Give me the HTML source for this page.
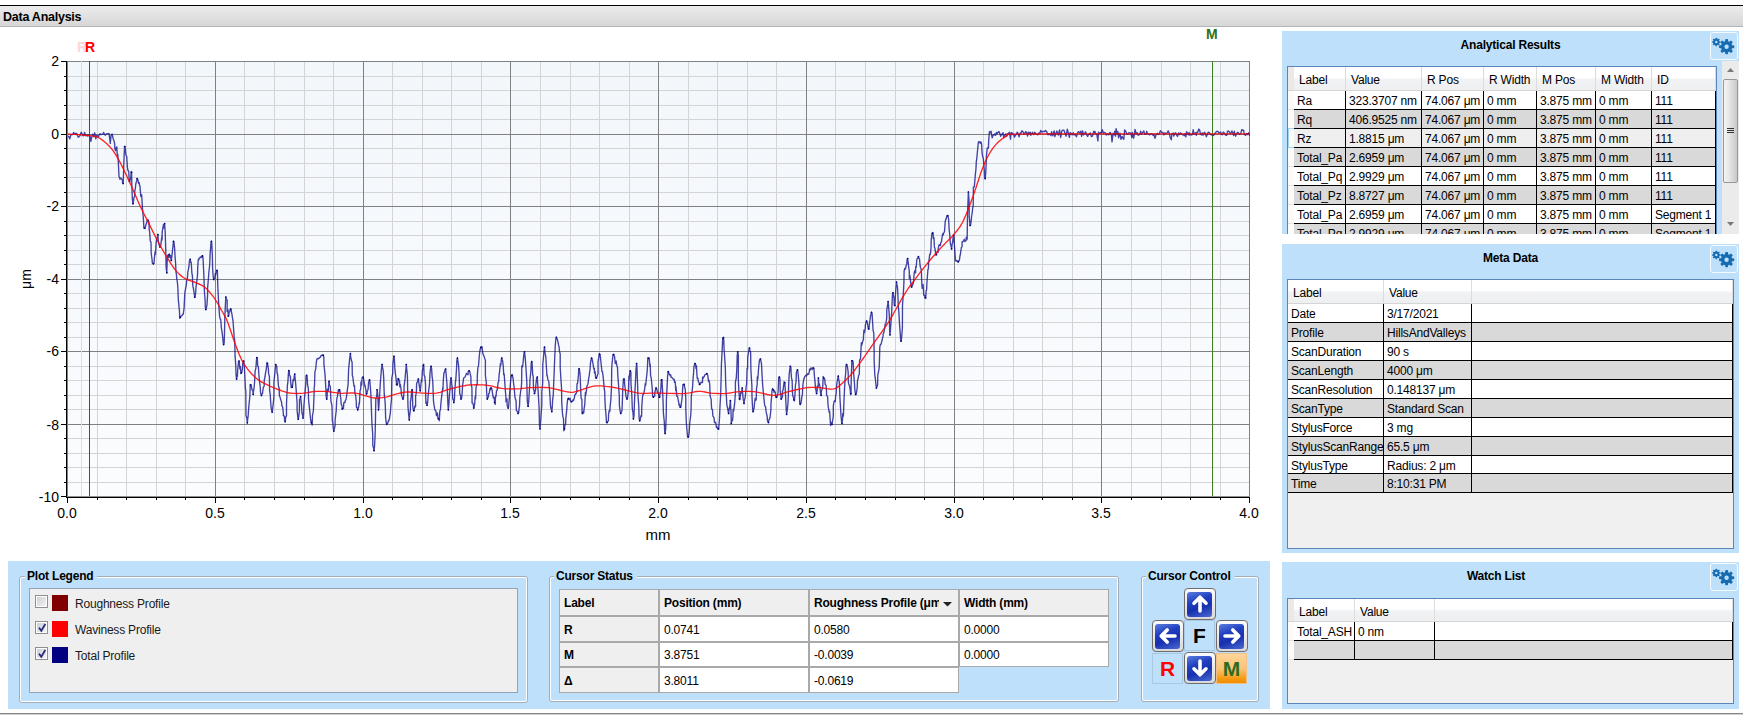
<!DOCTYPE html><html><head><meta charset="utf-8"><style>
*{margin:0;padding:0;box-sizing:border-box}
html,body{width:1743px;height:717px;overflow:hidden;background:#fff;font-family:"Liberation Sans", sans-serif;font-size:12px;color:#000}
.abs{position:absolute}
#topline{position:absolute;left:0;top:5px;width:1743px;height:1px;background:#000}
#hdr{position:absolute;left:0;top:6px;width:1743px;height:21px;background:linear-gradient(#ececec,#d6d6d6);border-bottom:1px solid #b4b4b4}
#hdr span{position:absolute;left:3px;top:4px;font-weight:bold;font-size:12.5px;letter-spacing:-0.25px}
.yl{position:absolute;left:20px;width:39px;text-align:right;font-size:14px;line-height:18px}
.xl{position:absolute;top:504px;width:60px;text-align:center;font-size:14px;line-height:18px}
.axt{position:absolute;font-size:14px;line-height:16px;text-align:center}
.mk{position:absolute;font-weight:bold;font-size:14px;line-height:16px}
.panel{position:absolute;background:#bee0fb}
.ptitle{position:absolute;left:0;margin-top:1px;width:100%;text-align:center;font-weight:bold;font-size:12px;letter-spacing:-0.2px}
.gearbtn{position:absolute;width:28px;height:28px;border:1px solid #f4faff;border-radius:3px;background:#bee0fb}
.gearbtn svg{position:absolute;left:-1px;top:-1px}
.tbl{position:absolute;background:#f0f0f0;border:1px solid #5b87b8;overflow:hidden}
.row{position:absolute;left:0;height:19px;border-bottom:1px solid #000}
.cell{position:absolute;top:0;height:18px;line-height:18px;padding-top:1px;padding-left:3px;white-space:nowrap;overflow:hidden;border-right:1px solid #000;letter-spacing:-0.2px}
.hrow{position:absolute;left:0;top:0;height:24px;background:linear-gradient(#ffffff 0%,#ffffff 45%,#f1f2f4 55%,#eeeff1 100%);border-bottom:1px solid #d5d5d5}
.hcell{position:absolute;top:0;height:23px;line-height:23px;padding-top:2px;padding-left:5px;white-space:nowrap;overflow:hidden;border-right:1px solid #dcdcdc;letter-spacing:-0.2px}
.grp{position:absolute;border:1px solid #fff;border-radius:3px;box-shadow:0 0 0 1px #a9b8c6 inset}
.gtitle{position:absolute;background:#bee0fb;font-weight:bold;font-size:12px;padding:0 4px 0 2px;line-height:14px;letter-spacing:-0.2px}
</style></head><body>
<div id="topline"></div><div id="hdr"><span>Data Analysis</span></div>
<svg width="1743" height="560" viewBox="0 0 1743 560" style="position:absolute;left:0;top:0" shape-rendering="crispEdges">
<defs><linearGradient id="pbg" x1="0" y1="0" x2="0" y2="1"><stop offset="0" stop-color="#f2f7fc"/><stop offset="1" stop-color="#fbfcfe"/></linearGradient></defs><rect x="68" y="61" width="1182" height="435" fill="url(#pbg)"/>
<rect x="97" y="61" width="1" height="436" fill="#d4d4d4"/>
<rect x="126" y="61" width="1" height="436" fill="#d4d4d4"/>
<rect x="156" y="61" width="1" height="436" fill="#d4d4d4"/>
<rect x="185" y="61" width="1" height="436" fill="#d4d4d4"/>
<rect x="244" y="61" width="1" height="436" fill="#d4d4d4"/>
<rect x="274" y="61" width="1" height="436" fill="#d4d4d4"/>
<rect x="304" y="61" width="1" height="436" fill="#d4d4d4"/>
<rect x="333" y="61" width="1" height="436" fill="#d4d4d4"/>
<rect x="392" y="61" width="1" height="436" fill="#d4d4d4"/>
<rect x="422" y="61" width="1" height="436" fill="#d4d4d4"/>
<rect x="451" y="61" width="1" height="436" fill="#d4d4d4"/>
<rect x="481" y="61" width="1" height="436" fill="#d4d4d4"/>
<rect x="540" y="61" width="1" height="436" fill="#d4d4d4"/>
<rect x="570" y="61" width="1" height="436" fill="#d4d4d4"/>
<rect x="599" y="61" width="1" height="436" fill="#d4d4d4"/>
<rect x="629" y="61" width="1" height="436" fill="#d4d4d4"/>
<rect x="688" y="61" width="1" height="436" fill="#d4d4d4"/>
<rect x="717" y="61" width="1" height="436" fill="#d4d4d4"/>
<rect x="747" y="61" width="1" height="436" fill="#d4d4d4"/>
<rect x="776" y="61" width="1" height="436" fill="#d4d4d4"/>
<rect x="835" y="61" width="1" height="436" fill="#d4d4d4"/>
<rect x="865" y="61" width="1" height="436" fill="#d4d4d4"/>
<rect x="895" y="61" width="1" height="436" fill="#d4d4d4"/>
<rect x="924" y="61" width="1" height="436" fill="#d4d4d4"/>
<rect x="983" y="61" width="1" height="436" fill="#d4d4d4"/>
<rect x="1013" y="61" width="1" height="436" fill="#d4d4d4"/>
<rect x="1042" y="61" width="1" height="436" fill="#d4d4d4"/>
<rect x="1072" y="61" width="1" height="436" fill="#d4d4d4"/>
<rect x="1131" y="61" width="1" height="436" fill="#d4d4d4"/>
<rect x="1161" y="61" width="1" height="436" fill="#d4d4d4"/>
<rect x="1190" y="61" width="1" height="436" fill="#d4d4d4"/>
<rect x="1220" y="61" width="1" height="436" fill="#d4d4d4"/>
<rect x="67" y="76" width="1183" height="1" fill="#d4d4d4"/>
<rect x="67" y="90" width="1183" height="1" fill="#d4d4d4"/>
<rect x="67" y="105" width="1183" height="1" fill="#d4d4d4"/>
<rect x="67" y="119" width="1183" height="1" fill="#d4d4d4"/>
<rect x="67" y="148" width="1183" height="1" fill="#d4d4d4"/>
<rect x="67" y="163" width="1183" height="1" fill="#d4d4d4"/>
<rect x="67" y="177" width="1183" height="1" fill="#d4d4d4"/>
<rect x="67" y="192" width="1183" height="1" fill="#d4d4d4"/>
<rect x="67" y="221" width="1183" height="1" fill="#d4d4d4"/>
<rect x="67" y="235" width="1183" height="1" fill="#d4d4d4"/>
<rect x="67" y="250" width="1183" height="1" fill="#d4d4d4"/>
<rect x="67" y="264" width="1183" height="1" fill="#d4d4d4"/>
<rect x="67" y="293" width="1183" height="1" fill="#d4d4d4"/>
<rect x="67" y="308" width="1183" height="1" fill="#d4d4d4"/>
<rect x="67" y="322" width="1183" height="1" fill="#d4d4d4"/>
<rect x="67" y="337" width="1183" height="1" fill="#d4d4d4"/>
<rect x="67" y="366" width="1183" height="1" fill="#d4d4d4"/>
<rect x="67" y="380" width="1183" height="1" fill="#d4d4d4"/>
<rect x="67" y="395" width="1183" height="1" fill="#d4d4d4"/>
<rect x="67" y="409" width="1183" height="1" fill="#d4d4d4"/>
<rect x="67" y="438" width="1183" height="1" fill="#d4d4d4"/>
<rect x="67" y="453" width="1183" height="1" fill="#d4d4d4"/>
<rect x="67" y="467" width="1183" height="1" fill="#d4d4d4"/>
<rect x="67" y="482" width="1183" height="1" fill="#d4d4d4"/>
<rect x="215" y="61" width="1" height="436" fill="#808080"/>
<rect x="363" y="61" width="1" height="436" fill="#808080"/>
<rect x="510" y="61" width="1" height="436" fill="#808080"/>
<rect x="658" y="61" width="1" height="436" fill="#808080"/>
<rect x="806" y="61" width="1" height="436" fill="#808080"/>
<rect x="954" y="61" width="1" height="436" fill="#808080"/>
<rect x="1101" y="61" width="1" height="436" fill="#808080"/>
<rect x="1249" y="61" width="1" height="436" fill="#808080"/>
<rect x="67" y="61" width="1183" height="1" fill="#808080"/>
<rect x="67" y="134" width="1183" height="1" fill="#808080"/>
<rect x="67" y="206" width="1183" height="1" fill="#808080"/>
<rect x="67" y="279" width="1183" height="1" fill="#808080"/>
<rect x="67" y="351" width="1183" height="1" fill="#808080"/>
<rect x="67" y="424" width="1183" height="1" fill="#808080"/>
<rect x="67" y="496" width="1183" height="1" fill="#808080"/>
<rect x="67" y="61" width="1" height="436" fill="#808080"/>
<rect x="67" y="496" width="1183" height="1" fill="#909090"/>
<rect x="66" y="61" width="1" height="437" fill="#000"/>
<rect x="66" y="497" width="1184" height="1" fill="#000"/>
<rect x="61" y="61" width="6" height="1" fill="#000"/>
<rect x="64" y="76" width="3" height="1" fill="#000"/>
<rect x="64" y="90" width="3" height="1" fill="#000"/>
<rect x="64" y="105" width="3" height="1" fill="#000"/>
<rect x="64" y="119" width="3" height="1" fill="#000"/>
<rect x="61" y="134" width="6" height="1" fill="#000"/>
<rect x="64" y="148" width="3" height="1" fill="#000"/>
<rect x="64" y="163" width="3" height="1" fill="#000"/>
<rect x="64" y="177" width="3" height="1" fill="#000"/>
<rect x="64" y="192" width="3" height="1" fill="#000"/>
<rect x="61" y="206" width="6" height="1" fill="#000"/>
<rect x="64" y="221" width="3" height="1" fill="#000"/>
<rect x="64" y="235" width="3" height="1" fill="#000"/>
<rect x="64" y="250" width="3" height="1" fill="#000"/>
<rect x="64" y="264" width="3" height="1" fill="#000"/>
<rect x="61" y="279" width="6" height="1" fill="#000"/>
<rect x="64" y="293" width="3" height="1" fill="#000"/>
<rect x="64" y="308" width="3" height="1" fill="#000"/>
<rect x="64" y="322" width="3" height="1" fill="#000"/>
<rect x="64" y="337" width="3" height="1" fill="#000"/>
<rect x="61" y="351" width="6" height="1" fill="#000"/>
<rect x="64" y="366" width="3" height="1" fill="#000"/>
<rect x="64" y="380" width="3" height="1" fill="#000"/>
<rect x="64" y="395" width="3" height="1" fill="#000"/>
<rect x="64" y="409" width="3" height="1" fill="#000"/>
<rect x="61" y="424" width="6" height="1" fill="#000"/>
<rect x="64" y="438" width="3" height="1" fill="#000"/>
<rect x="64" y="453" width="3" height="1" fill="#000"/>
<rect x="64" y="467" width="3" height="1" fill="#000"/>
<rect x="64" y="482" width="3" height="1" fill="#000"/>
<rect x="61" y="496" width="6" height="1" fill="#000"/>
<rect x="67" y="497" width="1" height="6" fill="#000"/>
<rect x="97" y="497" width="1" height="3" fill="#000"/>
<rect x="126" y="497" width="1" height="3" fill="#000"/>
<rect x="156" y="497" width="1" height="3" fill="#000"/>
<rect x="185" y="497" width="1" height="3" fill="#000"/>
<rect x="215" y="497" width="1" height="6" fill="#000"/>
<rect x="244" y="497" width="1" height="3" fill="#000"/>
<rect x="274" y="497" width="1" height="3" fill="#000"/>
<rect x="304" y="497" width="1" height="3" fill="#000"/>
<rect x="333" y="497" width="1" height="3" fill="#000"/>
<rect x="363" y="497" width="1" height="6" fill="#000"/>
<rect x="392" y="497" width="1" height="3" fill="#000"/>
<rect x="422" y="497" width="1" height="3" fill="#000"/>
<rect x="451" y="497" width="1" height="3" fill="#000"/>
<rect x="481" y="497" width="1" height="3" fill="#000"/>
<rect x="510" y="497" width="1" height="6" fill="#000"/>
<rect x="540" y="497" width="1" height="3" fill="#000"/>
<rect x="570" y="497" width="1" height="3" fill="#000"/>
<rect x="599" y="497" width="1" height="3" fill="#000"/>
<rect x="629" y="497" width="1" height="3" fill="#000"/>
<rect x="658" y="497" width="1" height="6" fill="#000"/>
<rect x="688" y="497" width="1" height="3" fill="#000"/>
<rect x="717" y="497" width="1" height="3" fill="#000"/>
<rect x="747" y="497" width="1" height="3" fill="#000"/>
<rect x="776" y="497" width="1" height="3" fill="#000"/>
<rect x="806" y="497" width="1" height="6" fill="#000"/>
<rect x="835" y="497" width="1" height="3" fill="#000"/>
<rect x="865" y="497" width="1" height="3" fill="#000"/>
<rect x="895" y="497" width="1" height="3" fill="#000"/>
<rect x="924" y="497" width="1" height="3" fill="#000"/>
<rect x="954" y="497" width="1" height="6" fill="#000"/>
<rect x="983" y="497" width="1" height="3" fill="#000"/>
<rect x="1013" y="497" width="1" height="3" fill="#000"/>
<rect x="1042" y="497" width="1" height="3" fill="#000"/>
<rect x="1072" y="497" width="1" height="3" fill="#000"/>
<rect x="1101" y="497" width="1" height="6" fill="#000"/>
<rect x="1131" y="497" width="1" height="3" fill="#000"/>
<rect x="1161" y="497" width="1" height="3" fill="#000"/>
<rect x="1190" y="497" width="1" height="3" fill="#000"/>
<rect x="1220" y="497" width="1" height="3" fill="#000"/>
<rect x="1249" y="497" width="1" height="6" fill="#000"/>
<rect x="81" y="61" width="1" height="435" fill="#ffd0d0"/>
<rect x="89" y="61" width="1" height="435" fill="#ff0000"/>
<rect x="1212" y="61" width="1" height="435" fill="#3f7f1f"/>
</svg>
<svg width="1743" height="560" viewBox="0 0 1743 560" style="position:absolute;left:0;top:0">
<defs><clipPath id="pc"><rect x="68" y="61" width="1182" height="435"/></clipPath></defs>
<g clip-path="url(#pc)">
<path d="M68.0,136.2 L68.9,136.7 L69.8,138.9 L70.8,135.0 L71.8,134.4 L72.7,134.5 L73.6,132.5 L74.6,133.9 L75.7,133.4 L76.8,133.5 L77.6,136.0 L78.3,137.3 L79.2,136.5 L79.9,135.7 L81.2,132.2 L82.0,133.8 L83.1,135.9 L83.7,135.5 L84.6,132.4 L85.4,135.7 L86.4,135.1 L87.2,136.1 L87.9,134.6 L88.8,135.7 L89.8,134.9 L90.9,141.5 L91.7,137.1 L92.7,134.1 L93.9,136.8 L94.7,132.8 L95.2,135.0 L95.8,138.9 L96.8,135.2 L98.0,136.3 L98.6,136.6 L99.2,134.5 L100.1,133.7 L100.9,134.7 L102.0,134.4 L102.9,134.3 L103.6,132.5 L104.8,134.8 L105.4,135.2 L106.5,133.8 L107.4,133.6 L108.5,133.9 L109.0,133.4 L110.3,143.4 L111.1,135.2 L112.2,134.1 L113.0,138.1 L114.0,141.0 L114.7,143.9 L114.8,147.8 L115.4,150.7 L116.2,147.9 L116.8,146.9 L117.3,155.8 L117.8,154.4 L118.3,161.8 L119.0,176.5 L119.3,177.1 L120.0,179.2 L120.6,178.0 L121.0,178.0 L121.3,178.9 L122.4,179.8 L122.5,182.9 L123.2,183.5 L123.5,173.4 L124.1,156.3 L124.6,146.5 L125.1,146.5 L125.9,155.0 L126.4,155.9 L126.7,156.3 L127.4,167.4 L128.0,170.7 L128.7,171.1 L129.2,180.1 L129.5,181.4 L130.0,180.7 L130.8,177.4 L131.2,171.4 L131.6,172.3 L131.8,182.9 L132.3,198.5 L133.0,203.7 L133.4,202.0 L134.0,197.4 L134.7,196.4 L134.8,190.5 L135.3,188.9 L135.8,183.8 L136.7,180.7 L137.1,178.6 L137.8,179.4 L138.1,180.7 L138.5,183.3 L139.2,182.6 L139.4,185.0 L139.9,185.5 L140.8,196.4 L141.1,194.6 L141.7,194.9 L141.9,198.7 L142.5,208.8 L142.9,213.3 L143.4,219.0 L143.9,228.0 L144.5,228.0 L145.1,228.5 L145.5,225.8 L145.7,225.8 L146.4,223.3 L147.1,221.2 L147.2,220.4 L147.8,220.2 L148.4,220.6 L149.0,222.4 L149.2,229.6 L149.6,231.6 L150.3,241.1 L151.0,242.2 L151.2,253.0 L152.1,260.0 L152.3,262.7 L153.0,263.5 L153.4,263.8 L154.0,263.3 L154.2,260.3 L155.1,251.6 L155.5,254.4 L155.9,245.9 L156.4,240.0 L156.8,238.4 L157.5,236.7 L157.9,234.7 L158.3,240.6 L158.6,242.7 L159.5,245.9 L160.0,247.0 L160.4,246.2 L160.8,244.9 L161.8,236.7 L162.1,239.9 L162.2,231.9 L163.4,224.7 L163.5,228.2 L164.1,226.4 L164.6,223.6 L165.2,232.0 L165.8,251.4 L166.1,267.5 L166.8,272.7 L167.1,262.8 L167.6,255.2 L168.5,257.4 L169.0,254.8 L169.3,254.0 L170.0,257.5 L170.5,255.4 L171.1,259.2 L171.3,260.4 L171.7,257.8 L172.2,253.1 L173.2,244.2 L173.5,241.4 L174.1,242.7 L174.7,249.2 L175.0,255.9 L175.6,263.5 L176.0,272.2 L176.3,273.3 L176.8,279.4 L177.3,281.3 L177.9,288.5 L178.1,294.9 L178.4,300.6 L179.5,311.5 L179.7,318.3 L180.2,317.3 L180.6,317.4 L181.1,315.9 L181.7,315.8 L182.4,315.1 L182.9,313.9 L183.2,314.3 L184.1,308.1 L184.3,303.4 L184.8,293.4 L185.7,287.8 L186.1,286.4 L186.5,282.8 L186.9,279.4 L187.4,278.5 L187.8,272.0 L188.2,270.4 L189.0,266.2 L189.4,261.0 L189.8,260.3 L190.2,259.3 L190.7,262.3 L191.2,262.2 L191.9,273.3 L192.4,275.6 L192.8,285.6 L192.9,286.3 L193.5,288.9 L194.2,293.5 L194.7,297.2 L195.2,296.1 L195.7,292.4 L196.0,286.8 L196.4,284.3 L197.5,275.5 L197.7,267.6 L198.3,259.3 L198.8,259.9 L199.2,258.2 L199.6,258.1 L200.2,257.1 L200.6,257.5 L201.4,256.5 L201.4,257.6 L201.9,256.2 L202.5,255.9 L203.0,257.8 L203.6,269.7 L204.0,279.3 L204.4,291.0 L205.1,300.3 L205.3,307.2 L205.8,309.5 L206.4,307.7 L206.9,305.6 L207.6,295.0 L207.6,288.3 L208.3,279.8 L208.9,272.0 L209.7,264.7 L210.1,253.7 L210.6,248.1 L210.9,243.2 L211.4,241.4 L211.8,243.6 L212.4,257.9 L212.6,268.2 L213.2,276.7 L213.7,279.4 L214.3,278.5 L214.9,278.1 L215.2,273.7 L215.5,275.4 L216.0,273.1 L216.5,271.4 L217.0,270.4 L217.4,270.7 L217.8,286.8 L218.2,294.3 L218.7,303.9 L219.5,315.4 L220.0,318.5 L220.7,319.5 L221.2,324.9 L221.2,326.8 L222.2,333.1 L222.8,338.3 L223.1,342.0 L223.6,344.5 L224.2,342.7 L224.5,332.8 L224.9,314.7 L225.6,300.8 L225.9,297.1 L226.2,298.6 L227.2,300.3 L227.1,311.6 L228.0,309.8 L228.3,316.1 L228.8,315.6 L229.0,312.4 L229.6,312.2 L230.3,309.1 L230.7,309.0 L231.0,309.0 L231.6,312.6 L232.2,315.7 L232.3,316.9 L233.0,320.8 L233.6,329.1 L234.2,337.4 L234.7,340.1 L235.1,356.4 L235.7,364.4 L236.1,375.8 L236.6,378.9 L237.0,374.7 L237.4,376.5 L237.7,369.3 L238.6,361.6 L239.0,361.1 L239.3,362.0 L239.9,369.0 L240.4,366.6 L240.9,373.5 L241.3,373.0 L241.9,372.1 L242.5,368.0 L242.7,363.8 L243.1,361.1 L243.7,361.1 L244.3,365.3 L244.7,373.1 L245.4,388.1 L245.8,391.0 L246.0,415.8 L246.8,417.9 L247.3,422.8 L247.8,418.2 L248.1,416.7 L248.6,409.3 L249.5,399.6 L249.9,395.5 L250.2,384.4 L250.8,384.9 L251.4,386.6 L251.8,388.2 L251.9,389.9 L252.8,390.1 L253.2,394.3 L253.7,389.9 L254.0,388.7 L254.6,381.7 L255.1,371.4 L255.9,368.0 L256.5,359.6 L256.8,357.6 L257.3,358.0 L257.7,366.1 L258.4,366.8 L258.8,373.2 L259.5,381.6 L260.2,386.3 L260.5,392.1 L261.0,394.6 L261.5,395.5 L262.0,393.7 L262.6,393.2 L262.9,390.3 L263.3,387.4 L264.2,386.1 L264.2,380.7 L265.1,376.5 L265.3,374.1 L266.1,370.5 L266.5,367.1 L267.0,362.5 L267.4,363.5 L267.8,365.1 L268.4,369.1 L268.6,373.6 L269.4,376.6 L269.6,390.3 L270.2,394.4 L270.5,399.4 L271.1,407.7 L271.8,411.4 L272.2,412.1 L272.7,408.2 L273.3,403.1 L273.9,396.7 L273.9,383.0 L274.5,376.4 L275.3,368.1 L275.7,364.7 L276.2,365.7 L276.8,366.4 L277.0,372.5 L277.8,375.7 L277.9,378.8 L278.5,386.2 L279.2,388.2 L279.4,395.9 L280.1,397.3 L280.5,399.1 L281.0,400.4 L281.7,403.0 L281.8,405.5 L282.7,407.1 L283.4,413.8 L283.3,415.7 L284.4,416.2 L284.6,420.6 L285.2,421.6 L285.8,416.8 L286.5,415.8 L286.5,403.8 L287.4,385.5 L287.9,381.6 L288.4,373.7 L288.8,370.6 L289.3,371.0 L289.5,375.4 L290.4,376.3 L290.6,381.1 L291.3,387.7 L291.9,385.2 L292.3,387.2 L292.7,384.8 L293.0,379.8 L293.7,380.6 L294.2,376.4 L294.7,374.2 L295.1,378.0 L295.5,381.9 L296.2,390.4 L297.1,403.3 L297.1,410.0 L297.8,417.6 L298.3,419.2 L298.8,415.9 L299.4,411.6 L299.5,399.5 L300.0,398.9 L300.6,396.7 L301.0,400.4 L301.5,405.1 L301.9,412.5 L302.7,416.1 L303.0,418.0 L303.4,416.2 L303.9,405.9 L304.3,400.5 L305.0,392.4 L305.8,383.9 L306.0,376.4 L306.6,375.4 L307.2,377.4 L307.5,384.1 L308.4,388.9 L308.5,398.4 L309.0,404.7 L309.8,411.1 L310.0,413.7 L310.8,420.9 L311.3,422.8 L311.7,420.7 L312.2,425.1 L312.5,415.5 L313.4,410.5 L314.0,395.9 L314.2,387.8 L314.5,385.9 L314.9,372.2 L315.7,368.9 L316.3,363.0 L316.7,359.6 L317.2,358.8 L317.7,358.5 L318.4,358.8 L318.8,358.0 L319.4,358.0 L320.0,357.3 L320.4,357.1 L320.9,355.9 L321.1,355.4 L321.9,355.3 L322.0,355.6 L322.6,355.0 L323.2,355.2 L323.8,357.0 L324.0,365.2 L324.9,373.0 L325.1,375.6 L325.8,387.8 L326.1,396.1 L326.7,399.1 L327.0,398.2 L327.4,389.2 L328.3,390.8 L328.8,382.0 L329.1,381.3 L329.5,385.2 L330.3,386.4 L330.8,397.7 L330.9,401.0 L332.0,405.8 L332.3,420.6 L332.8,422.5 L333.2,427.8 L333.8,431.1 L334.2,429.5 L335.1,425.6 L335.1,419.9 L336.2,411.0 L336.6,402.0 L337.0,397.5 L337.4,396.7 L337.8,393.7 L338.4,389.6 L339.1,391.7 L339.5,389.8 L340.0,390.8 L340.4,396.5 L340.8,397.6 L341.1,403.9 L342.0,405.8 L342.3,408.9 L342.9,408.6 L343.5,408.4 L343.8,402.7 L344.1,402.4 L345.0,402.6 L345.4,400.2 L345.9,399.8 L346.3,397.9 L347.1,392.6 L347.1,391.9 L348.1,384.1 L348.6,370.1 L348.6,369.1 L349.5,360.6 L349.8,356.9 L350.4,353.6 L350.8,357.7 L351.6,361.1 L352.1,362.0 L352.3,375.4 L352.8,376.7 L353.4,381.9 L354.0,386.2 L354.5,385.5 L354.9,393.5 L355.6,394.8 L356.2,400.7 L356.5,407.4 L357.1,407.7 L357.7,409.8 L358.2,408.5 L358.6,407.3 L359.3,402.2 L359.4,404.0 L360.1,390.3 L360.7,389.1 L361.0,382.0 L361.6,385.2 L362.1,377.9 L362.6,377.5 L363.1,377.1 L363.6,378.5 L363.9,380.7 L365.0,386.7 L365.0,385.1 L365.9,390.1 L366.3,394.8 L366.7,393.5 L367.3,391.3 L367.8,390.3 L368.2,388.5 L368.5,383.0 L369.0,381.2 L369.5,379.9 L370.0,382.7 L370.5,389.0 L370.9,394.9 L371.4,408.8 L371.9,423.1 L372.7,434.2 L372.8,445.5 L373.6,448.4 L374.0,450.6 L374.5,447.0 L375.1,435.4 L375.4,423.3 L375.8,398.9 L376.7,396.1 L377.1,389.8 L377.6,392.7 L378.1,401.4 L378.5,409.8 L378.9,407.1 L379.2,401.3 L379.8,392.2 L380.3,383.5 L381.1,372.9 L381.6,367.5 L382.1,364.5 L382.6,367.7 L383.2,370.7 L383.7,377.7 L384.2,393.4 L385.0,401.0 L385.3,405.4 L385.6,417.1 L386.2,422.7 L386.7,424.3 L387.3,423.5 L387.6,423.5 L388.4,420.7 L388.7,421.1 L389.4,418.8 L390.0,414.9 L390.3,413.8 L391.0,403.9 L391.5,399.8 L391.8,378.3 L392.7,373.4 L392.9,363.6 L393.3,360.4 L393.9,356.3 L394.3,357.1 L394.8,367.9 L395.4,373.5 L396.1,378.7 L396.6,384.4 L397.3,385.3 L397.9,382.9 L398.0,378.5 L398.5,379.0 L399.0,379.9 L399.7,381.5 L399.8,386.8 L400.4,384.7 L401.1,389.4 L401.2,393.3 L401.8,395.7 L402.6,397.9 L403.0,398.9 L403.5,397.8 L404.0,392.3 L404.1,386.2 L405.1,378.4 L405.5,373.3 L405.8,370.0 L406.3,364.5 L406.9,370.7 L407.4,375.7 L407.7,392.2 L408.0,407.3 L409.0,418.1 L409.3,419.8 L409.6,416.0 L410.4,409.9 L410.4,402.2 L411.3,396.2 L411.6,390.9 L412.1,389.8 L412.4,389.9 L412.7,406.0 L413.6,410.8 L413.9,410.7 L414.4,408.5 L414.9,405.9 L415.6,406.8 L415.6,396.1 L416.4,392.1 L416.6,383.3 L417.6,381.7 L417.9,379.8 L418.4,379.0 L418.9,382.9 L419.2,384.9 L419.7,388.2 L420.2,390.7 L420.6,387.7 L421.5,379.3 L421.8,381.6 L422.3,371.1 L422.7,368.9 L423.3,365.4 L423.7,364.2 L424.1,375.3 L424.7,376.1 L425.5,383.9 L425.6,392.1 L425.9,403.4 L426.7,402.2 L427.1,405.2 L427.6,402.7 L428.0,397.3 L428.6,391.2 L429.4,385.2 L429.7,380.0 L430.1,372.0 L430.7,367.7 L431.1,366.3 L431.6,368.4 L432.1,376.6 L432.7,380.6 L433.0,387.6 L433.5,401.3 L434.1,405.4 L434.7,408.9 L435.3,410.5 L435.8,410.6 L436.5,415.7 L436.9,414.1 L437.5,413.0 L437.9,417.9 L438.4,418.8 L439.0,418.6 L439.3,420.7 L439.8,411.1 L440.5,409.4 L440.7,405.8 L441.4,398.5 L441.7,396.2 L442.8,387.4 L443.0,389.2 L443.3,380.5 L443.9,373.1 L444.7,371.7 L445.0,369.9 L445.6,369.0 L446.2,374.7 L446.9,383.4 L447.4,391.8 L447.9,404.1 L448.3,409.8 L448.9,404.2 L449.5,393.7 L450.0,389.5 L450.3,382.6 L451.0,378.1 L451.4,379.7 L452.2,388.7 L452.2,386.3 L452.7,398.7 L453.5,400.4 L453.8,402.5 L454.4,400.1 L454.8,391.0 L455.6,379.8 L455.7,381.3 L456.6,367.2 L456.8,360.6 L457.4,358.1 L458.0,361.4 L458.7,366.9 L459.2,376.8 L459.4,383.8 L459.7,393.6 L460.6,395.7 L461.0,398.9 L461.6,398.1 L462.1,393.5 L462.6,385.3 L463.4,379.9 L463.7,378.1 L464.2,377.3 L464.6,377.3 L465.0,377.0 L466.0,374.7 L466.3,373.6 L466.4,373.5 L467.5,374.1 L468.0,374.8 L468.2,371.4 L468.6,371.1 L469.2,370.8 L469.8,371.9 L470.1,373.3 L470.9,377.0 L471.0,383.4 L471.9,387.5 L472.1,403.0 L472.8,403.2 L473.3,404.6 L473.7,408.0 L474.1,407.5 L474.7,403.5 L475.2,396.4 L475.6,398.8 L476.0,387.6 L476.7,385.1 L477.2,383.8 L477.3,376.0 L477.9,367.6 L478.5,366.0 L479.0,359.5 L479.7,351.7 L480.1,349.9 L480.5,348.0 L481.0,347.2 L481.4,348.1 L482.1,346.8 L482.3,349.8 L483.0,354.1 L483.5,354.9 L484.1,356.4 L484.6,358.1 L485.4,360.4 L485.4,375.5 L486.3,382.4 L486.7,393.3 L487.3,398.9 L487.7,398.3 L488.5,396.4 L488.6,393.8 L489.3,393.2 L489.9,388.7 L490.4,389.8 L490.9,388.0 L491.3,387.9 L491.8,388.6 L492.3,391.7 L492.9,396.0 L493.4,397.7 L494.1,397.5 L494.6,402.5 L495.2,404.3 L495.5,395.9 L495.9,396.9 L496.6,390.6 L497.3,389.8 L497.9,384.3 L498.1,382.3 L498.6,382.0 L499.1,375.2 L499.5,372.1 L500.4,363.8 L500.8,365.1 L501.4,359.0 L501.8,358.1 L502.2,359.7 L502.6,360.9 L503.3,366.8 L503.7,374.7 L504.2,374.0 L504.5,378.6 L505.0,386.0 L505.9,397.0 L506.0,401.8 L507.0,399.0 L507.2,406.0 L507.7,406.8 L508.2,408.0 L508.6,406.6 L509.4,397.3 L509.4,395.9 L510.3,385.3 L510.6,381.1 L511.3,376.0 L511.8,375.3 L512.2,374.5 L512.6,376.4 L513.1,378.5 L513.8,385.5 L514.0,385.9 L515.0,397.5 L514.9,397.0 L515.6,399.6 L516.0,400.4 L516.4,410.7 L517.2,411.2 L517.7,411.8 L518.1,413.4 L518.7,412.4 L519.2,407.3 L519.5,406.7 L519.8,398.0 L520.9,389.5 L521.2,389.1 L521.6,383.4 L521.8,366.0 L522.6,366.7 L523.0,363.4 L523.7,355.9 L524.1,352.9 L524.5,351.8 L525.0,355.6 L525.4,360.1 L526.2,371.8 L526.8,381.4 L527.2,398.5 L527.5,403.3 L528.1,406.2 L528.6,402.5 L529.1,394.8 L529.9,383.1 L529.9,380.3 L530.9,370.7 L531.2,363.1 L531.7,361.7 L532.1,362.9 L532.7,375.0 L533.2,376.1 L533.5,389.5 L534.0,390.3 L534.5,393.5 L534.8,393.0 L535.7,389.0 L535.7,386.2 L536.5,378.9 L536.8,378.0 L537.3,377.1 L537.8,385.8 L538.2,392.2 L539.1,407.6 L539.5,425.6 L540.0,428.8 L540.4,424.6 L540.8,419.9 L541.8,404.5 L541.8,392.5 L542.7,383.2 L542.8,364.3 L543.4,358.5 L543.9,351.5 L544.5,347.2 L545.2,353.9 L545.8,356.7 L546.4,367.0 L546.9,375.6 L547.2,375.3 L547.8,379.2 L548.2,380.3 L548.8,381.5 L549.3,387.4 L550.0,396.7 L550.4,404.5 L550.6,406.8 L551.3,409.6 L551.8,411.6 L552.3,406.4 L552.6,400.2 L553.3,394.6 L553.7,383.5 L554.3,369.5 L554.7,357.8 L555.3,345.0 L555.7,340.0 L556.3,337.3 L557.0,338.8 L557.2,338.9 L558.1,342.3 L558.6,345.4 L559.0,346.3 L559.5,351.6 L560.2,353.8 L560.2,367.3 L560.9,379.0 L561.6,389.0 L561.7,401.6 L562.5,413.8 L563.0,416.9 L563.5,418.8 L563.8,430.7 L564.5,428.8 L564.9,425.2 L565.6,424.0 L565.8,418.6 L566.9,408.4 L567.0,405.5 L567.5,400.6 L568.1,398.9 L568.7,398.0 L569.4,399.6 L569.9,398.4 L570.3,398.6 L570.4,400.8 L571.0,401.8 L571.7,401.6 L572.3,401.0 L572.9,400.6 L573.1,399.7 L573.5,400.5 L574.5,397.3 L574.7,395.4 L575.0,395.2 L575.7,393.6 L576.2,393.5 L576.8,391.8 L577.0,384.0 L577.6,383.3 L578.4,375.4 L578.8,368.5 L579.3,369.0 L579.8,372.3 L580.2,375.9 L580.6,388.4 L581.1,398.3 L581.9,399.4 L582.1,413.3 L582.6,413.4 L583.0,411.7 L583.8,412.5 L584.1,408.6 L584.8,404.3 L585.4,392.4 L585.6,395.6 L586.4,390.8 L586.6,387.5 L587.2,385.7 L587.7,384.4 L588.1,383.2 L588.6,378.9 L589.4,374.7 L589.6,371.9 L590.0,369.9 L590.5,362.7 L591.2,359.2 L591.6,358.1 L592.1,359.2 L592.6,361.7 L593.2,365.2 L593.8,369.0 L594.4,368.5 L594.4,373.1 L595.1,371.5 L595.6,377.5 L596.2,378.1 L596.7,377.8 L597.2,375.8 L598.1,373.4 L598.0,361.8 L598.8,357.2 L599.3,353.4 L599.8,354.5 L600.5,357.5 L600.7,360.0 L601.4,366.3 L601.9,371.5 L602.5,371.7 L603.0,375.6 L603.4,379.4 L604.2,388.2 L604.8,392.3 L604.8,396.2 L605.3,407.5 L605.9,413.4 L606.5,422.6 L607.1,422.5 L607.6,421.5 L608.4,420.9 L608.6,414.1 L609.2,410.5 L609.8,411.6 L610.2,405.6 L610.8,400.4 L611.5,387.5 L611.7,368.8 L612.1,363.0 L613.0,355.0 L613.4,354.5 L613.9,354.3 L614.7,357.4 L614.8,359.0 L615.3,363.6 L616.1,360.9 L616.6,363.9 L617.0,366.3 L617.5,367.4 L617.8,375.3 L618.3,381.6 L619.3,396.4 L619.4,405.5 L620.2,411.4 L620.7,413.4 L621.3,412.1 L622.0,410.7 L622.5,397.1 L622.7,390.0 L623.4,379.5 L623.9,379.0 L624.3,379.1 L624.7,385.0 L625.2,388.5 L626.0,396.6 L626.6,398.1 L627.0,398.9 L627.6,397.8 L628.0,393.6 L628.5,390.0 L628.9,376.0 L629.1,380.1 L629.9,371.6 L630.3,370.8 L630.9,372.2 L631.0,384.1 L631.8,394.6 L632.3,408.7 L633.0,412.9 L633.4,418.8 L634.0,416.2 L634.4,404.2 L635.0,390.4 L635.6,379.2 L636.0,369.3 L636.6,363.5 L636.9,365.9 L637.4,379.3 L637.9,394.6 L638.8,406.3 L639.1,418.2 L639.7,420.7 L640.4,418.8 L641.0,415.7 L641.6,416.2 L641.8,406.3 L642.5,397.1 L642.9,394.4 L643.3,394.4 L643.7,393.9 L644.1,391.8 L644.7,388.9 L645.2,383.8 L645.6,385.4 L646.6,376.5 L647.1,372.1 L647.5,366.3 L647.8,357.7 L648.4,358.8 L648.8,358.1 L649.3,359.1 L649.9,366.5 L650.2,364.1 L650.6,375.7 L651.2,378.0 L652.0,386.2 L652.2,388.3 L652.7,396.1 L653.3,397.1 L653.8,396.8 L654.7,396.1 L654.9,392.2 L655.7,388.6 L656.0,388.0 L656.5,388.2 L657.2,390.8 L657.3,391.9 L658.1,393.6 L658.6,394.1 L659.1,397.6 L659.6,397.1 L660.3,392.0 L660.6,392.7 L661.3,380.2 L661.5,379.9 L662.0,379.7 L662.6,391.6 L663.1,402.5 L663.4,413.1 L664.3,421.8 L664.7,431.6 L665.1,433.4 L665.7,428.8 L666.2,416.6 L666.4,399.5 L667.1,386.4 L667.6,376.0 L668.2,371.7 L668.8,372.5 L669.1,373.8 L669.8,375.0 L670.3,375.9 L670.6,374.6 L671.2,377.4 L671.8,377.3 L672.3,378.2 L672.8,378.5 L673.2,379.0 L673.7,379.6 L674.3,379.5 L674.5,382.4 L675.3,381.9 L675.7,390.4 L675.9,386.5 L676.9,396.4 L677.4,396.0 L677.8,397.4 L677.9,398.3 L678.6,401.9 L679.0,405.1 L679.5,404.4 L680.0,407.5 L680.5,407.1 L681.0,406.4 L681.2,404.1 L682.0,399.0 L682.6,389.5 L682.9,384.6 L683.5,384.4 L684.1,384.4 L684.7,387.3 L685.3,389.6 L685.8,398.7 L685.8,408.8 L686.3,422.5 L687.0,430.3 L687.5,436.5 L688.1,437.0 L688.6,436.8 L689.2,432.2 L689.6,424.5 L689.9,421.7 L690.8,414.7 L691.1,408.6 L691.3,396.3 L692.2,390.6 L692.7,385.1 L693.1,378.1 L693.5,374.0 L693.9,366.8 L694.4,365.1 L695.0,363.5 L695.6,364.3 L696.0,368.5 L696.5,365.8 L696.8,373.2 L697.3,378.6 L698.0,378.5 L698.3,381.7 L699.1,382.7 L699.5,384.4 L700.0,384.3 L700.6,383.3 L701.0,382.2 L701.3,382.5 L701.6,382.5 L702.5,382.5 L702.6,377.0 L703.2,378.2 L703.7,377.2 L704.3,376.4 L704.6,375.1 L705.2,374.7 L705.9,374.4 L706.3,374.3 L706.8,373.5 L707.3,374.1 L707.8,375.6 L708.5,381.5 L708.6,379.8 L709.4,381.7 L709.8,385.8 L710.1,396.0 L711.2,399.4 L711.3,403.4 L711.6,408.9 L712.4,409.5 L712.9,416.1 L713.5,416.9 L714.1,418.1 L714.5,422.6 L715.0,422.5 L715.5,422.2 L716.0,424.0 L716.4,427.5 L716.9,426.7 L717.4,428.0 L718.2,429.3 L718.6,428.8 L719.1,423.6 L719.5,418.2 L720.0,405.9 L720.7,394.1 L721.2,375.0 L721.4,364.7 L722.3,347.3 L722.7,338.7 L723.1,338.2 L723.6,337.1 L724.1,349.4 L724.5,354.9 L725.3,367.2 L725.7,383.9 L726.2,392.8 L726.7,402.5 L727.0,406.0 L727.6,408.0 L727.8,409.8 L728.6,413.4 L729.2,408.3 L729.3,409.3 L729.7,406.8 L730.4,400.7 L731.1,413.8 L731.3,423.4 L731.6,420.1 L732.4,420.9 L732.9,416.8 L733.1,409.4 L733.6,411.2 L734.1,408.0 L734.7,402.8 L735.4,393.2 L735.4,382.2 L736.3,378.0 L736.9,366.8 L737.2,355.3 L737.7,351.8 L738.4,355.1 L738.3,379.3 L738.9,391.1 L739.5,398.9 L739.9,399.7 L740.7,392.7 L741.1,393.5 L741.8,390.4 L742.2,388.0 L742.7,393.6 L743.2,399.4 L743.4,399.9 L744.0,403.4 L744.5,399.8 L745.1,398.0 L745.5,394.4 L746.2,386.2 L746.6,384.6 L747.1,368.3 L747.6,369.0 L747.7,357.6 L748.4,353.2 L749.1,348.5 L749.5,348.1 L750.0,351.4 L750.6,351.7 L750.9,370.3 L751.9,386.1 L752.0,397.4 L752.7,409.6 L753.1,411.6 L753.6,410.3 L754.1,407.9 L754.4,404.4 L755.2,398.3 L755.5,400.4 L756.2,399.7 L756.5,388.7 L757.2,384.3 L757.3,377.0 L757.8,379.5 L758.4,371.0 L758.8,366.0 L759.5,360.0 L759.9,359.7 L760.4,359.0 L760.8,360.4 L761.5,363.9 L762.0,374.1 L762.5,382.3 L762.7,385.5 L763.4,393.0 L764.1,399.7 L764.5,403.9 L764.9,406.2 L765.5,406.5 L766.0,410.1 L766.1,411.9 L767.2,416.1 L767.4,420.5 L768.1,422.2 L768.5,422.5 L768.9,419.9 L769.4,419.3 L770.1,417.0 L770.9,409.8 L771.0,403.4 L771.7,395.8 L772.0,390.7 L772.6,388.5 L773.1,389.8 L773.7,389.9 L773.9,392.3 L774.5,390.8 L775.3,392.6 L775.8,397.5 L776.0,397.3 L776.7,397.1 L777.2,396.2 L778.1,392.3 L778.3,387.7 L778.7,377.3 L779.4,377.1 L780.0,379.3 L780.2,392.0 L780.8,394.5 L781.2,398.9 L781.6,398.6 L782.5,396.4 L782.4,391.0 L783.0,390.7 L784.1,381.8 L784.3,384.2 L784.8,382.6 L785.2,388.1 L785.9,402.7 L786.2,409.3 L786.6,414.3 L787.0,411.8 L787.7,406.2 L788.1,401.3 L788.7,384.4 L789.1,375.4 L789.8,369.2 L790.3,366.3 L790.9,367.3 L791.1,372.8 L791.5,377.9 L792.1,380.4 L792.6,394.7 L793.5,397.7 L793.9,399.8 L794.4,400.9 L795.0,394.0 L795.5,384.3 L796.0,382.4 L796.4,372.4 L796.9,371.1 L797.5,369.9 L798.0,372.8 L798.8,381.2 L799.3,390.1 L799.7,403.3 L800.2,404.3 L800.7,402.8 L801.0,403.4 L801.9,396.3 L802.4,395.0 L802.5,391.5 L803.0,384.1 L803.8,378.8 L804.1,379.0 L804.6,376.8 L805.1,376.2 L805.7,375.3 L806.3,375.4 L806.6,375.8 L807.3,374.4 L807.7,373.7 L808.3,373.8 L808.7,374.2 L809.2,372.1 L809.6,369.1 L810.3,370.1 L810.3,368.6 L811.1,367.9 L811.8,369.1 L812.1,369.6 L812.5,368.3 L813.0,367.5 L813.5,368.1 L813.9,368.7 L814.5,376.9 L815.1,382.5 L815.5,387.7 L816.2,391.8 L816.6,393.5 L817.3,390.0 L817.2,386.2 L818.2,386.4 L818.4,378.1 L818.8,382.9 L819.2,383.8 L819.9,386.6 L820.7,394.5 L821.1,395.3 L821.4,390.6 L822.0,389.5 L822.7,387.6 L823.2,376.4 L823.8,378.1 L824.3,378.7 L824.8,379.4 L825.1,384.3 L826.1,385.4 L826.5,390.9 L826.6,395.4 L827.6,396.7 L827.9,403.0 L828.2,406.4 L829.2,412.3 L829.6,411.2 L830.0,417.1 L830.6,425.5 L830.9,422.1 L831.6,423.8 L832.0,424.3 L832.5,421.3 L833.3,416.1 L833.3,405.9 L834.2,401.2 L834.7,400.7 L835.3,401.6 L835.7,395.1 L836.1,394.5 L836.7,384.9 L837.3,380.6 L837.8,378.3 L838.3,376.2 L838.7,379.8 L839.3,381.9 L839.9,397.2 L840.3,403.8 L840.9,414.3 L841.6,421.9 L842.0,423.4 L842.5,420.0 L842.8,413.4 L843.4,416.0 L843.9,402.5 L844.6,387.6 L845.1,379.0 L845.7,372.7 L845.9,366.2 L846.5,364.5 L847.0,365.0 L847.6,367.8 L848.2,372.4 L848.3,381.6 L848.7,383.9 L849.4,385.5 L850.2,390.0 L850.6,394.8 L851.0,393.5 L851.3,375.8 L851.9,360.8 L852.6,360.5 L853.1,362.1 L853.7,373.9 L854.4,382.4 L854.8,389.1 L855.1,391.3 L855.6,394.4 L856.2,394.1 L856.8,390.7 L857.2,387.5 L857.5,380.5 L858.5,377.0 L858.4,375.9 L859.3,374.2 L859.6,359.9 L860.5,359.0 L860.9,350.5 L861.4,342.6 L861.7,345.3 L862.3,343.2 L862.8,340.9 L863.4,339.5 L863.5,336.9 L863.9,330.2 L864.5,332.6 L865.2,328.7 L865.4,325.0 L866.0,322.3 L866.6,321.1 L867.3,322.5 L867.7,325.0 L868.0,327.5 L868.6,328.9 L869.1,328.9 L869.3,324.8 L869.9,321.0 L870.5,316.2 L871.1,313.8 L871.5,312.3 L872.1,313.8 L872.6,322.5 L873.1,330.5 L873.8,333.2 L874.2,354.5 L874.1,359.6 L874.8,375.1 L875.4,379.2 L875.8,383.8 L876.4,388.0 L876.8,386.9 L877.6,385.1 L877.8,375.1 L878.5,372.0 L879.2,367.6 L879.4,362.2 L879.8,347.1 L880.4,344.5 L880.9,344.5 L881.3,343.2 L882.0,340.5 L882.6,338.0 L883.0,335.9 L883.3,333.2 L883.8,332.7 L884.7,328.0 L885.1,324.3 L885.6,324.6 L886.1,322.1 L886.7,318.2 L886.8,309.8 L887.7,304.4 L888.1,301.6 L888.4,303.8 L889.3,315.1 L889.7,332.1 L890.0,334.8 L890.5,329.3 L890.9,323.2 L891.8,310.6 L891.8,308.7 L892.5,294.0 L893.0,292.8 L893.3,294.9 L894.1,298.5 L894.2,305.1 L894.9,305.5 L895.5,293.7 L895.9,288.5 L896.5,282.0 L897.1,285.2 L897.5,287.1 L897.8,292.7 L898.3,306.0 L899.0,314.2 L899.5,323.7 L900.3,334.3 L900.7,341.1 L901.2,341.0 L901.7,336.7 L902.4,327.4 L902.5,304.9 L903.1,297.2 L903.9,282.9 L904.1,271.5 L904.7,268.4 L905.4,269.0 L905.5,268.6 L906.4,264.6 L906.8,263.9 L907.1,259.8 L907.6,258.6 L908.1,261.8 L908.7,267.1 L909.3,271.2 L909.3,278.2 L909.9,275.3 L910.7,282.4 L911.0,284.6 L911.5,286.9 L912.0,286.8 L912.5,284.5 L913.2,284.1 L913.5,281.7 L913.7,280.8 L914.2,272.7 L915.1,270.2 L915.6,272.9 L915.7,266.8 L916.2,267.3 L916.9,259.2 L917.2,258.6 L917.9,257.9 L918.4,256.7 L918.9,258.2 L919.5,258.9 L920.1,265.7 L920.5,267.5 L921.1,268.8 L921.5,273.8 L921.5,276.4 L922.1,288.3 L922.5,287.2 L923.1,284.4 L923.7,294.8 L924.2,295.8 L924.7,295.2 L925.2,297.7 L925.8,298.4 L926.1,291.0 L926.6,289.9 L926.9,283.0 L927.9,269.8 L928.4,268.4 L928.6,262.5 L929.3,258.1 L929.7,254.2 L930.1,254.7 L930.7,252.0 L931.1,246.0 L931.2,240.1 L932.0,233.5 L932.4,233.2 L933.0,232.5 L933.4,238.6 L934.0,237.8 L934.4,246.9 L934.9,248.3 L935.6,253.1 L936.0,254.7 L936.6,254.7 L936.7,252.3 L937.8,251.4 L938.2,252.2 L938.2,248.7 L939.1,244.7 L939.5,245.2 L939.9,244.9 L940.4,245.5 L940.8,242.7 L941.6,241.4 L941.6,240.4 L942.2,236.5 L942.6,233.8 L943.1,235.2 L943.9,232.4 L944.5,231.8 L944.9,226.3 L945.2,221.6 L945.9,218.8 L946.3,218.9 L946.7,216.0 L947.2,216.4 L947.7,215.6 L948.1,216.5 L948.6,219.2 L949.1,229.3 L949.8,235.0 L949.9,238.0 L950.4,243.6 L951.1,246.4 L951.6,248.8 L952.1,244.1 L952.8,241.9 L952.8,240.1 L953.5,235.2 L953.9,237.5 L954.5,246.5 L955.2,256.6 L955.5,260.6 L956.0,261.1 L956.5,260.5 L956.7,261.1 L957.7,260.9 L958.1,262.4 L958.4,261.5 L958.9,260.8 L959.5,259.6 L960.1,254.9 L960.2,255.5 L960.7,251.9 L961.4,247.3 L962.1,246.8 L962.1,241.7 L962.7,241.8 L963.3,241.0 L963.8,240.8 L964.2,239.1 L964.9,241.6 L965.5,241.1 L966.0,240.5 L966.3,237.1 L966.6,239.8 L967.2,239.1 L967.5,214.2 L968.4,192.0 L969.1,201.6 L969.2,216.9 L970.1,225.4 L970.6,224.9 L971.4,218.8 L971.5,217.0 L972.1,213.5 L972.6,208.7 L973.2,205.9 L973.4,187.2 L974.3,186.9 L974.7,182.2 L975.4,174.1 L976.0,168.5 L976.3,161.6 L976.8,158.5 L977.6,149.8 L978.1,144.7 L978.5,141.8 L978.8,141.6 L979.6,142.0 L979.9,142.7 L980.4,143.3 L981.0,141.8 L981.6,144.5 L982.1,152.8 L982.7,156.8 L983.3,158.5 L984.0,167.3 L984.3,170.1 L984.6,177.7 L985.2,178.6 L985.7,173.8 L986.0,167.4 L986.5,155.1 L987.3,147.9 L987.7,148.5 L988.4,148.2 L988.7,141.0 L989.4,131.7 L990.5,132.8 L991.0,131.1 L992.2,137.8 L993.1,135.1 L994.0,135.0 L994.5,134.0 L995.5,135.2 L996.4,132.4 L997.1,133.9 L997.8,132.6 L998.9,131.4 L1000.2,134.6 L1000.7,136.3 L1001.4,134.2 L1002.3,134.6 L1003.0,132.7 L1003.8,137.7 L1004.4,135.0 L1005.2,134.8 L1005.9,133.8 L1006.4,136.2 L1007.7,133.7 L1008.4,133.4 L1009.5,132.3 L1010.5,139.2 L1011.1,133.0 L1011.9,132.7 L1013.0,134.7 L1013.9,134.1 L1014.4,137.2 L1015.3,135.7 L1016.1,134.6 L1016.6,134.1 L1017.1,132.2 L1017.9,132.9 L1018.4,134.5 L1019.1,136.9 L1020.1,133.1 L1020.6,134.0 L1021.7,131.0 L1022.9,131.4 L1023.9,134.4 L1024.5,133.7 L1025.7,131.5 L1026.3,133.5 L1026.8,132.4 L1027.5,136.0 L1028.6,132.2 L1029.2,133.5 L1030.3,132.3 L1030.8,135.3 L1031.4,133.9 L1032.5,132.3 L1033.8,134.6 L1034.7,132.2 L1035.5,133.4 L1036.6,134.2 L1037.8,134.8 L1038.8,133.0 L1040.0,133.0 L1040.7,130.4 L1041.9,132.2 L1042.9,131.5 L1043.7,131.4 L1044.8,131.6 L1045.5,130.4 L1046.8,131.8 L1047.4,133.7 L1048.2,134.8 L1048.9,133.7 L1049.8,133.9 L1051.0,135.6 L1051.6,131.6 L1052.9,135.8 L1054.1,130.9 L1054.9,136.6 L1055.9,133.2 L1056.9,131.0 L1057.6,133.4 L1058.3,135.1 L1059.1,131.9 L1059.6,129.9 L1060.7,137.5 L1061.8,131.0 L1062.9,130.1 L1063.8,130.1 L1065.1,133.5 L1066.1,136.2 L1067.3,129.1 L1068.5,133.6 L1069.4,137.4 L1070.1,132.7 L1070.8,132.9 L1072.1,134.9 L1073.3,132.7 L1074.0,135.0 L1075.3,134.4 L1076.5,136.8 L1077.2,133.5 L1078.3,131.6 L1079.1,132.1 L1079.8,133.2 L1080.9,131.1 L1081.6,136.4 L1082.7,130.9 L1083.5,134.9 L1084.5,133.6 L1085.6,131.8 L1086.7,134.7 L1087.6,136.4 L1088.2,134.9 L1089.4,134.1 L1090.2,132.9 L1091.4,136.5 L1092.5,136.1 L1093.7,131.4 L1094.3,132.8 L1094.8,131.3 L1095.6,133.5 L1096.8,134.1 L1097.9,140.9 L1098.5,132.2 L1099.4,133.6 L1100.0,133.0 L1100.7,132.4 L1101.4,132.9 L1102.3,129.6 L1103.3,133.0 L1104.1,132.4 L1105.4,132.8 L1106.2,135.0 L1107.1,134.2 L1107.9,134.0 L1108.6,134.9 L1109.4,133.1 L1110.4,132.4 L1111.5,135.6 L1112.0,141.9 L1113.1,133.3 L1114.1,134.9 L1114.7,131.3 L1115.5,136.1 L1116.1,128.6 L1117.3,134.3 L1117.9,131.6 L1118.6,137.8 L1119.9,133.2 L1121.0,139.3 L1122.0,136.4 L1122.9,138.1 L1123.8,139.2 L1124.6,130.0 L1125.8,131.5 L1126.9,134.2 L1127.8,134.0 L1129.0,132.7 L1129.9,132.8 L1130.7,132.9 L1131.9,137.7 L1132.4,132.3 L1133.6,138.0 L1134.5,133.8 L1135.0,129.4 L1136.3,133.9 L1137.2,132.6 L1138.0,135.1 L1138.5,135.2 L1139.6,134.5 L1140.7,131.1 L1141.3,134.0 L1142.5,132.7 L1143.8,130.9 L1144.7,134.4 L1146.0,134.0 L1146.7,131.3 L1147.4,133.5 L1148.4,133.8 L1149.7,134.9 L1150.8,133.7 L1151.9,133.6 L1153.1,135.5 L1153.8,134.2 L1155.0,138.4 L1156.2,134.0 L1157.5,133.2 L1158.0,134.6 L1159.3,133.8 L1160.4,130.7 L1161.6,132.3 L1162.8,132.3 L1163.9,134.9 L1164.9,132.8 L1165.6,133.6 L1166.7,133.3 L1167.5,132.4 L1168.2,130.9 L1169.3,133.2 L1170.2,137.5 L1171.3,139.8 L1171.9,133.6 L1173.2,133.0 L1173.8,136.1 L1174.8,133.3 L1175.6,132.7 L1176.7,135.2 L1177.5,136.5 L1178.6,132.9 L1179.5,134.6 L1180.2,132.9 L1180.9,133.1 L1181.7,134.1 L1182.5,134.8 L1183.7,134.8 L1184.2,135.7 L1185.3,133.6 L1185.8,136.8 L1186.6,131.6 L1187.6,133.7 L1188.4,134.8 L1189.1,132.5 L1189.8,135.2 L1190.5,134.1 L1191.7,135.0 L1192.6,134.0 L1193.2,129.6 L1193.8,134.2 L1194.4,133.5 L1195.3,132.8 L1196.3,135.3 L1196.8,132.1 L1197.8,132.4 L1198.6,129.1 L1199.6,130.0 L1200.5,134.1 L1201.6,134.9 L1202.1,132.8 L1203.0,135.2 L1204.0,132.8 L1204.6,132.3 L1205.4,133.7 L1206.4,136.7 L1207.4,134.1 L1208.2,132.2 L1209.5,132.9 L1210.2,134.2 L1211.4,134.9 L1212.3,134.9 L1213.4,135.5 L1214.6,133.9 L1215.2,133.1 L1216.0,132.1 L1216.9,131.3 L1217.9,131.4 L1218.9,133.1 L1220.1,132.4 L1220.8,132.1 L1221.3,133.7 L1222.2,134.8 L1223.4,132.0 L1224.7,133.7 L1225.6,135.2 L1226.7,135.4 L1227.5,131.3 L1228.4,130.9 L1229.4,132.0 L1230.2,133.8 L1231.4,132.2 L1231.9,130.9 L1232.9,133.4 L1233.7,135.5 L1234.3,131.1 L1234.9,134.1 L1235.7,136.2 L1236.3,133.9 L1236.9,133.7 L1237.5,132.3 L1238.3,132.6 L1239.5,134.5 L1240.2,133.9 L1240.8,133.6 L1241.7,129.6 L1242.9,130.4 L1243.6,130.2 L1244.2,134.0 L1245.4,135.4 L1246.0,134.7 L1246.6,133.5 L1247.5,134.6 L1248.6,132.8 L1249.6,135.6 L1250.3,133.3" fill="none" stroke="#14148c" stroke-width="1.35" stroke-opacity="0.8" stroke-linejoin="round"/>
<g fill="#000080"><circle cx="123.2" cy="183.5" r="0.85"/><circle cx="124.6" cy="146.5" r="0.85"/><circle cx="129.5" cy="181.4" r="0.85"/><circle cx="131.6" cy="172.3" r="0.85"/><circle cx="133.0" cy="203.7" r="0.85"/><circle cx="137.1" cy="178.6" r="0.85"/><circle cx="144.5" cy="228.0" r="0.85"/><circle cx="147.8" cy="220.2" r="0.85"/><circle cx="153.4" cy="263.8" r="0.85"/><circle cx="157.9" cy="234.7" r="0.85"/><circle cx="160.0" cy="247.0" r="0.85"/><circle cx="164.6" cy="223.6" r="0.85"/><circle cx="166.8" cy="272.7" r="0.85"/><circle cx="169.0" cy="254.8" r="0.85"/><circle cx="171.3" cy="260.4" r="0.85"/><circle cx="173.5" cy="241.4" r="0.85"/><circle cx="180.2" cy="317.3" r="0.85"/><circle cx="190.2" cy="259.3" r="0.85"/><circle cx="194.7" cy="297.2" r="0.85"/><circle cx="202.5" cy="255.9" r="0.85"/><circle cx="205.8" cy="309.5" r="0.85"/><circle cx="211.4" cy="241.4" r="0.85"/><circle cx="213.7" cy="279.4" r="0.85"/><circle cx="217.0" cy="270.4" r="0.85"/><circle cx="223.6" cy="344.5" r="0.85"/><circle cx="225.9" cy="297.1" r="0.85"/><circle cx="228.3" cy="316.1" r="0.85"/><circle cx="230.7" cy="309.0" r="0.85"/><circle cx="236.6" cy="378.9" r="0.85"/><circle cx="239.0" cy="361.1" r="0.85"/><circle cx="241.3" cy="373.0" r="0.85"/><circle cx="243.7" cy="361.1" r="0.85"/><circle cx="247.3" cy="422.8" r="0.85"/><circle cx="250.8" cy="384.9" r="0.85"/><circle cx="253.2" cy="394.3" r="0.85"/><circle cx="256.8" cy="357.6" r="0.85"/><circle cx="261.5" cy="395.5" r="0.85"/><circle cx="267.4" cy="363.5" r="0.85"/><circle cx="272.2" cy="412.1" r="0.85"/><circle cx="275.7" cy="364.7" r="0.85"/><circle cx="285.2" cy="421.6" r="0.85"/><circle cx="288.8" cy="370.6" r="0.85"/><circle cx="292.3" cy="387.2" r="0.85"/><circle cx="294.7" cy="374.2" r="0.85"/><circle cx="298.3" cy="419.2" r="0.85"/><circle cx="300.6" cy="396.7" r="0.85"/><circle cx="303.0" cy="418.0" r="0.85"/><circle cx="306.6" cy="375.4" r="0.85"/><circle cx="311.3" cy="422.8" r="0.85"/><circle cx="323.2" cy="355.2" r="0.85"/><circle cx="326.7" cy="399.1" r="0.85"/><circle cx="329.1" cy="381.3" r="0.85"/><circle cx="333.8" cy="431.1" r="0.85"/><circle cx="339.5" cy="389.8" r="0.85"/><circle cx="342.3" cy="408.9" r="0.85"/><circle cx="350.4" cy="353.6" r="0.85"/><circle cx="357.7" cy="409.8" r="0.85"/><circle cx="363.1" cy="377.1" r="0.85"/><circle cx="366.7" cy="393.5" r="0.85"/><circle cx="369.5" cy="379.9" r="0.85"/><circle cx="374.0" cy="450.6" r="0.85"/><circle cx="377.1" cy="389.8" r="0.85"/><circle cx="378.5" cy="409.8" r="0.85"/><circle cx="382.1" cy="364.5" r="0.85"/><circle cx="386.7" cy="424.3" r="0.85"/><circle cx="393.9" cy="356.3" r="0.85"/><circle cx="396.6" cy="384.4" r="0.85"/><circle cx="398.5" cy="379.0" r="0.85"/><circle cx="403.0" cy="398.9" r="0.85"/><circle cx="406.3" cy="364.5" r="0.85"/><circle cx="409.3" cy="419.8" r="0.85"/><circle cx="412.1" cy="389.8" r="0.85"/><circle cx="413.9" cy="410.7" r="0.85"/><circle cx="418.4" cy="379.0" r="0.85"/><circle cx="420.2" cy="390.7" r="0.85"/><circle cx="423.3" cy="365.4" r="0.85"/><circle cx="427.1" cy="405.2" r="0.85"/><circle cx="431.1" cy="366.3" r="0.85"/><circle cx="438.4" cy="418.8" r="0.85"/><circle cx="445.6" cy="369.0" r="0.85"/><circle cx="448.3" cy="409.8" r="0.85"/><circle cx="451.0" cy="378.1" r="0.85"/><circle cx="453.8" cy="402.5" r="0.85"/><circle cx="457.4" cy="358.1" r="0.85"/><circle cx="461.0" cy="398.9" r="0.85"/><circle cx="469.2" cy="370.8" r="0.85"/><circle cx="473.7" cy="408.0" r="0.85"/><circle cx="481.0" cy="347.2" r="0.85"/><circle cx="487.3" cy="398.9" r="0.85"/><circle cx="490.9" cy="388.0" r="0.85"/><circle cx="494.6" cy="402.5" r="0.85"/><circle cx="501.8" cy="358.1" r="0.85"/><circle cx="508.2" cy="408.0" r="0.85"/><circle cx="511.8" cy="375.3" r="0.85"/><circle cx="518.1" cy="413.4" r="0.85"/><circle cx="524.5" cy="351.8" r="0.85"/><circle cx="528.1" cy="406.2" r="0.85"/><circle cx="531.7" cy="361.7" r="0.85"/><circle cx="534.5" cy="393.5" r="0.85"/><circle cx="537.3" cy="377.1" r="0.85"/><circle cx="540.0" cy="428.8" r="0.85"/><circle cx="544.5" cy="347.2" r="0.85"/><circle cx="551.8" cy="411.6" r="0.85"/><circle cx="556.3" cy="337.3" r="0.85"/><circle cx="564.5" cy="428.8" r="0.85"/><circle cx="568.1" cy="398.9" r="0.85"/><circle cx="571.7" cy="401.6" r="0.85"/><circle cx="579.3" cy="369.0" r="0.85"/><circle cx="582.6" cy="413.4" r="0.85"/><circle cx="591.6" cy="358.1" r="0.85"/><circle cx="596.2" cy="378.1" r="0.85"/><circle cx="599.8" cy="354.5" r="0.85"/><circle cx="607.1" cy="422.5" r="0.85"/><circle cx="613.4" cy="354.5" r="0.85"/><circle cx="620.7" cy="413.4" r="0.85"/><circle cx="623.9" cy="379.0" r="0.85"/><circle cx="627.0" cy="398.9" r="0.85"/><circle cx="630.3" cy="370.8" r="0.85"/><circle cx="633.4" cy="418.8" r="0.85"/><circle cx="636.6" cy="363.5" r="0.85"/><circle cx="639.7" cy="420.7" r="0.85"/><circle cx="648.8" cy="358.1" r="0.85"/><circle cx="653.3" cy="397.1" r="0.85"/><circle cx="656.0" cy="388.0" r="0.85"/><circle cx="659.6" cy="397.1" r="0.85"/><circle cx="661.5" cy="379.9" r="0.85"/><circle cx="665.1" cy="433.4" r="0.85"/><circle cx="668.2" cy="371.7" r="0.85"/><circle cx="680.5" cy="407.1" r="0.85"/><circle cx="684.1" cy="384.4" r="0.85"/><circle cx="688.1" cy="437.0" r="0.85"/><circle cx="695.0" cy="363.5" r="0.85"/><circle cx="699.5" cy="384.4" r="0.85"/><circle cx="706.8" cy="373.5" r="0.85"/><circle cx="718.6" cy="428.8" r="0.85"/><circle cx="723.1" cy="338.2" r="0.85"/><circle cx="728.6" cy="413.4" r="0.85"/><circle cx="730.4" cy="400.7" r="0.85"/><circle cx="731.3" cy="423.4" r="0.85"/><circle cx="737.7" cy="351.8" r="0.85"/><circle cx="739.5" cy="398.9" r="0.85"/><circle cx="742.2" cy="388.0" r="0.85"/><circle cx="744.0" cy="403.4" r="0.85"/><circle cx="749.5" cy="348.1" r="0.85"/><circle cx="753.1" cy="411.6" r="0.85"/><circle cx="760.4" cy="359.0" r="0.85"/><circle cx="768.5" cy="422.5" r="0.85"/><circle cx="773.1" cy="389.8" r="0.85"/><circle cx="776.7" cy="397.1" r="0.85"/><circle cx="779.4" cy="377.1" r="0.85"/><circle cx="781.2" cy="398.9" r="0.85"/><circle cx="784.8" cy="382.6" r="0.85"/><circle cx="786.6" cy="414.3" r="0.85"/><circle cx="790.3" cy="366.3" r="0.85"/><circle cx="793.9" cy="399.8" r="0.85"/><circle cx="797.5" cy="369.9" r="0.85"/><circle cx="800.2" cy="404.3" r="0.85"/><circle cx="813.5" cy="368.1" r="0.85"/><circle cx="816.6" cy="393.5" r="0.85"/><circle cx="818.4" cy="378.1" r="0.85"/><circle cx="821.1" cy="395.3" r="0.85"/><circle cx="823.8" cy="378.1" r="0.85"/><circle cx="832.0" cy="424.3" r="0.85"/><circle cx="838.3" cy="376.2" r="0.85"/><circle cx="842.0" cy="423.4" r="0.85"/><circle cx="846.5" cy="364.5" r="0.85"/><circle cx="851.0" cy="393.5" r="0.85"/><circle cx="851.9" cy="360.8" r="0.85"/><circle cx="855.6" cy="394.4" r="0.85"/><circle cx="866.6" cy="321.1" r="0.85"/><circle cx="868.6" cy="328.9" r="0.85"/><circle cx="871.5" cy="312.3" r="0.85"/><circle cx="876.4" cy="388.0" r="0.85"/><circle cx="888.1" cy="301.6" r="0.85"/><circle cx="890.0" cy="334.8" r="0.85"/><circle cx="893.0" cy="292.8" r="0.85"/><circle cx="894.9" cy="305.5" r="0.85"/><circle cx="896.5" cy="282.0" r="0.85"/><circle cx="901.2" cy="341.0" r="0.85"/><circle cx="907.6" cy="258.6" r="0.85"/><circle cx="911.5" cy="286.9" r="0.85"/><circle cx="918.4" cy="256.7" r="0.85"/><circle cx="925.2" cy="297.7" r="0.85"/><circle cx="932.4" cy="233.2" r="0.85"/><circle cx="936.0" cy="254.7" r="0.85"/><circle cx="947.7" cy="215.6" r="0.85"/><circle cx="951.6" cy="248.8" r="0.85"/><circle cx="953.5" cy="235.2" r="0.85"/><circle cx="958.4" cy="261.5" r="0.85"/><circle cx="968.4" cy="192.0" r="0.85"/><circle cx="970.1" cy="225.4" r="0.85"/><circle cx="985.2" cy="178.6" r="0.85"/></g>
<path d="M68.0,134.0 L70.5,134.2 L74.1,134.4 L78.3,134.7 L82.6,135.0 L86.6,135.3 L89.7,135.6 L91.9,135.9 L93.5,136.1 L94.8,136.3 L95.9,136.6 L96.9,136.9 L98.1,137.4 L99.3,138.0 L100.5,138.7 L101.6,139.5 L102.7,140.4 L103.9,141.3 L105.0,142.3 L106.2,143.3 L107.3,144.3 L108.5,145.4 L109.7,146.6 L110.8,147.9 L112.0,149.3 L113.2,150.9 L114.3,152.6 L115.5,154.4 L116.7,156.3 L117.8,158.3 L119.0,160.4 L120.2,162.6 L121.3,164.8 L122.5,167.1 L123.7,169.5 L124.8,172.0 L126.0,174.4 L127.2,176.9 L128.3,179.4 L129.5,181.9 L130.7,184.5 L131.8,187.1 L133.0,189.7 L134.1,192.3 L135.3,194.9 L136.4,197.5 L137.5,200.2 L138.7,202.9 L140.0,205.7 L141.4,208.6 L142.8,211.5 L144.3,214.5 L145.9,217.6 L147.4,220.6 L148.9,223.6 L150.4,226.6 L151.9,229.6 L153.4,232.6 L154.9,235.6 L156.4,238.6 L157.9,241.4 L159.4,244.2 L160.9,246.8 L162.4,249.5 L163.8,252.0 L165.3,254.6 L166.8,257.0 L168.3,259.4 L169.8,261.8 L171.2,264.2 L172.7,266.4 L174.2,268.5 L175.7,270.4 L177.2,272.1 L178.6,273.6 L180.0,274.9 L181.5,276.1 L183.0,277.2 L184.6,278.3 L186.4,279.2 L188.2,280.0 L190.2,280.7 L192.2,281.4 L194.0,282.0 L195.8,282.7 L197.4,283.4 L198.9,284.0 L200.4,284.6 L201.8,285.3 L203.2,286.1 L204.7,287.2 L206.2,288.5 L207.8,290.1 L209.3,291.8 L210.9,293.6 L212.3,295.4 L213.7,297.2 L214.9,299.0 L216.1,300.8 L217.2,302.6 L218.3,304.5 L219.3,306.4 L220.4,308.4 L221.5,310.3 L222.6,312.0 L223.6,313.8 L224.7,315.8 L225.9,318.1 L227.1,320.8 L228.4,324.2 L229.7,328.0 L231.2,332.2 L232.6,336.5 L234.0,340.7 L235.4,344.5 L236.7,348.0 L238.0,351.4 L239.3,354.6 L240.7,357.7 L242.1,360.7 L243.7,363.5 L245.5,366.2 L247.4,368.8 L249.4,371.3 L251.5,373.7 L253.6,375.8 L255.6,377.7 L257.5,379.3 L259.4,380.7 L261.3,381.8 L263.3,382.9 L265.3,383.9 L267.4,384.9 L269.7,386.0 L272.2,387.1 L274.7,388.1 L277.2,389.1 L279.6,390.0 L281.7,390.8 L283.5,391.4 L285.1,391.9 L286.5,392.4 L288.0,392.7 L289.4,393.0 L291.1,393.2 L292.9,393.4 L294.9,393.4 L296.9,393.5 L298.9,393.4 L301.0,393.3 L303.0,393.2 L305.0,393.0 L307.0,392.7 L309.0,392.3 L310.9,392.0 L312.9,391.7 L314.9,391.5 L316.9,391.4 L318.8,391.3 L320.7,391.3 L322.7,391.3 L324.7,391.4 L326.7,391.5 L328.8,391.7 L330.9,392.0 L333.0,392.4 L335.2,392.7 L337.5,393.0 L339.8,393.2 L342.3,393.3 L344.9,393.2 L347.7,393.1 L350.3,393.0 L352.8,393.0 L355.0,393.1 L356.8,393.3 L358.4,393.6 L359.8,394.0 L361.1,394.4 L362.5,394.9 L364.0,395.3 L365.7,395.8 L367.5,396.3 L369.3,396.8 L371.2,397.3 L373.1,397.8 L374.9,398.0 L376.7,398.1 L378.6,398.0 L380.5,397.9 L382.3,397.7 L384.1,397.4 L385.8,397.1 L387.4,396.8 L388.8,396.3 L390.2,395.8 L391.6,395.3 L393.1,394.9 L394.8,394.4 L396.7,393.9 L398.7,393.4 L400.8,393.0 L403.0,392.5 L405.2,392.2 L407.5,392.0 L409.8,392.0 L412.2,392.1 L414.6,392.4 L417.1,392.7 L419.6,392.9 L422.0,393.1 L424.5,393.2 L427.0,393.3 L429.5,393.4 L431.9,393.4 L434.3,393.3 L436.5,393.1 L438.5,392.7 L440.3,392.3 L441.9,391.7 L443.6,391.0 L445.4,390.4 L447.4,389.8 L449.6,389.2 L452.1,388.5 L454.6,387.9 L457.2,387.2 L459.6,386.7 L461.9,386.2 L463.9,385.8 L465.7,385.5 L467.3,385.2 L469.0,385.0 L470.8,384.9 L472.8,384.8 L475.0,384.7 L477.4,384.7 L479.8,384.8 L482.3,384.9 L484.8,385.0 L487.3,385.3 L489.7,385.7 L492.1,386.2 L494.6,386.8 L497.0,387.5 L499.4,388.0 L501.8,388.4 L504.2,388.7 L506.7,388.8 L509.1,388.9 L511.5,389.0 L513.9,388.9 L516.3,388.9 L518.6,388.8 L520.8,388.6 L522.9,388.3 L525.1,388.1 L527.5,387.9 L530.0,387.7 L532.8,387.6 L535.7,387.5 L538.8,387.4 L541.9,387.4 L545.0,387.5 L548.1,387.7 L551.2,388.2 L554.5,388.9 L557.8,389.7 L560.9,390.5 L563.8,391.2 L566.3,391.7 L568.2,392.0 L569.6,392.2 L570.8,392.3 L572.0,392.3 L573.4,392.1 L575.3,391.7 L577.8,391.0 L580.8,390.1 L584.1,388.9 L587.4,387.8 L590.6,386.8 L593.5,386.2 L596.2,385.9 L598.7,385.8 L601.1,385.9 L603.4,386.1 L605.7,386.4 L608.0,386.6 L610.2,386.9 L612.2,387.2 L614.1,387.5 L616.1,387.9 L618.3,388.4 L620.7,388.9 L623.4,389.5 L626.3,390.3 L629.4,391.1 L632.6,391.9 L635.7,392.6 L638.8,393.1 L641.7,393.3 L644.5,393.4 L647.3,393.3 L650.2,393.2 L653.4,393.1 L656.9,393.1 L661.1,393.2 L665.8,393.3 L670.7,393.4 L675.6,393.5 L680.2,393.6 L684.1,393.5 L687.3,393.2 L689.9,392.8 L692.3,392.3 L694.4,391.8 L696.4,391.5 L698.6,391.3 L700.8,391.4 L702.9,391.7 L705.0,392.0 L707.1,392.5 L709.1,392.8 L711.3,393.1 L713.5,393.3 L715.8,393.4 L718.0,393.5 L720.3,393.6 L722.7,393.6 L725.0,393.5 L727.4,393.3 L729.8,393.0 L732.2,392.6 L734.6,392.2 L737.1,391.9 L739.5,391.7 L741.9,391.6 L744.1,391.4 L746.4,391.4 L748.8,391.4 L751.3,391.5 L754.0,391.7 L757.1,392.2 L760.5,392.9 L764.0,393.7 L767.5,394.5 L770.9,395.1 L774.0,395.3 L776.7,395.1 L779.1,394.6 L781.4,394.0 L783.6,393.2 L785.9,392.4 L788.5,391.7 L791.4,391.0 L794.5,390.2 L797.7,389.5 L800.8,388.8 L803.9,388.1 L806.6,387.7 L809.0,387.5 L811.2,387.4 L813.2,387.4 L815.1,387.5 L817.1,387.6 L819.3,387.7 L821.7,387.9 L824.2,388.3 L826.8,388.7 L829.3,389.0 L831.7,389.1 L833.8,388.9 L835.6,388.3 L837.2,387.5 L838.7,386.4 L840.1,385.2 L841.5,383.9 L842.9,382.6 L844.4,381.3 L845.8,380.0 L847.3,378.6 L848.8,377.0 L850.3,375.4 L851.9,373.5 L853.6,371.4 L855.4,369.2 L857.2,366.7 L859.0,364.2 L860.9,361.6 L862.8,359.0 L864.7,356.4 L866.5,353.7 L868.4,350.9 L870.4,348.0 L872.4,345.1 L874.5,342.0 L876.8,338.8 L879.1,335.6 L881.6,332.2 L884.1,328.7 L886.6,325.0 L889.1,321.1 L891.7,316.8 L894.4,312.0 L897.2,307.0 L899.9,302.1 L902.4,297.6 L904.7,293.8 L906.6,290.8 L908.3,288.4 L909.7,286.3 L911.2,284.5 L912.7,282.5 L914.5,280.1 L916.5,277.4 L918.7,274.4 L921.1,271.4 L923.4,268.4 L925.8,265.4 L928.1,262.5 L930.4,259.7 L932.7,257.0 L935.1,254.3 L937.4,251.8 L939.6,249.3 L941.8,246.9 L943.9,244.7 L945.9,242.6 L947.9,240.7 L949.8,238.8 L951.7,236.9 L953.4,235.0 L955.0,233.1 L956.5,231.3 L957.9,229.5 L959.3,227.7 L960.5,225.8 L961.8,223.7 L963.0,221.5 L964.1,219.1 L965.2,216.6 L966.3,214.1 L967.3,211.4 L968.4,208.7 L969.5,205.8 L970.6,202.9 L971.7,199.8 L972.9,196.7 L974.0,193.5 L975.1,190.3 L976.2,187.0 L977.3,183.5 L978.5,180.0 L979.6,176.6 L980.7,173.3 L981.8,170.2 L982.9,167.4 L984.0,164.7 L985.0,162.2 L986.1,159.8 L987.3,157.5 L988.5,155.2 L989.8,153.0 L991.1,150.9 L992.5,148.8 L993.9,146.9 L995.4,145.1 L996.9,143.4 L998.5,141.8 L1000.2,140.4 L1001.9,139.0 L1003.6,137.8 L1005.3,136.8 L1006.9,135.9 L1007.5,135.3 L1007.0,134.9 L1006.4,134.6 L1006.9,134.5 L1009.5,134.3 L1015.3,134.2 L1024.2,134.1 L1035.5,134.0 L1048.8,133.9 L1064.1,133.9 L1081.2,133.8 L1100.0,133.8 L1123.0,133.8 L1150.7,133.8 L1180.3,133.8 L1208.7,133.8 L1232.9,133.8 L1250.0,133.8" fill="none" stroke="#ff0000" stroke-width="1.35" stroke-opacity="0.85" stroke-linejoin="round"/>
</g></svg>
<div class="yl" style="top:52px">2</div>
<div class="yl" style="top:125px">0</div>
<div class="yl" style="top:197px">-2</div>
<div class="yl" style="top:270px">-4</div>
<div class="yl" style="top:342px">-6</div>
<div class="yl" style="top:416px">-8</div>
<div class="yl" style="top:488px">-10</div>
<div class="xl" style="left:37px">0.0</div>
<div class="xl" style="left:185px">0.5</div>
<div class="xl" style="left:333px">1.0</div>
<div class="xl" style="left:480px">1.5</div>
<div class="xl" style="left:628px">2.0</div>
<div class="xl" style="left:776px">2.5</div>
<div class="xl" style="left:924px">3.0</div>
<div class="xl" style="left:1071px">3.5</div>
<div class="xl" style="left:1219px">4.0</div>
<div class="axt" style="left:0;top:271px;width:55px;height:16px;transform:rotate(-90deg);transform-origin:27.5px 8px;left:-2px">μm</div>
<div class="axt" style="left:628px;top:526px;width:60px;text-align:center;font-size:15px;line-height:17px">mm</div>
<div class="mk" style="left:77px;top:39px;color:#ffd6d6">R</div>
<div class="mk" style="left:85px;top:39px;color:#ff0000">R</div>
<div class="mk" style="left:1206px;top:26px;color:#2f6f0f">M</div>
<div class="panel" style="left:1282px;top:31px;width:457px;height:203px">
<div class="ptitle" style="top:6px">Analytical Results</div>
<div class="gearbtn" style="left:428px;top:1px"><svg width="28" height="28" viewBox="0 0 28 28">
<g fill="#176cb0">
<circle cx="6.3" cy="10" r="3.1"/>
<rect x="5.5" y="5.8" width="1.6" height="8.4" rx="0.5" transform="rotate(0 6.3 10)"/><rect x="5.5" y="5.8" width="1.6" height="8.4" rx="0.5" transform="rotate(45 6.3 10)"/><rect x="5.5" y="5.8" width="1.6" height="8.4" rx="0.5" transform="rotate(90 6.3 10)"/><rect x="5.5" y="5.8" width="1.6" height="8.4" rx="0.5" transform="rotate(135 6.3 10)"/>
<circle cx="16.6" cy="14.7" r="5.6"/>
<rect x="15.1" y="7.1" width="3" height="15.2" rx="1" transform="rotate(0 16.6 14.7)"/><rect x="15.1" y="7.1" width="3" height="15.2" rx="1" transform="rotate(45 16.6 14.7)"/><rect x="15.1" y="7.1" width="3" height="15.2" rx="1" transform="rotate(90 16.6 14.7)"/><rect x="15.1" y="7.1" width="3" height="15.2" rx="1" transform="rotate(135 16.6 14.7)"/>
</g>
<circle cx="6.3" cy="10" r="1.2" fill="#bee0fb"/>
<circle cx="16.6" cy="14.7" r="2.2" fill="#bee0fb"/>
</svg></div>
</div>
<div class="tbl" style="left:1287px;top:66px;width:430px;height:178px">
<div class="hrow" style="width:428px;height:24px">
<div class="abs" style="left:0;top:0;width:6px;height:23px;background:#e9e9e9"></div>
<div class="hcell" style="left:6px;width:52px;height:23px;line-height:23px">Label</div>
<div class="hcell" style="left:58px;width:76px;height:23px;line-height:23px">Value</div>
<div class="hcell" style="left:134px;width:62px;height:23px;line-height:23px">R Pos</div>
<div class="hcell" style="left:196px;width:53px;height:23px;line-height:23px">R Width</div>
<div class="hcell" style="left:249px;width:59px;height:23px;line-height:23px">M Pos</div>
<div class="hcell" style="left:308px;width:56px;height:23px;line-height:23px">M Width</div>
<div class="hcell" style="left:364px;width:64px;height:23px;line-height:23px">ID</div>
</div>
<div class="abs" style="left:0;top:24px;width:6px;height:19px;background:#fbfbfb;border-bottom:1px solid #e3e3e3"></div>
<div class="row" style="left:6px;top:24px;width:422px;height:19px;background:#ffffff">
<div class="cell" style="left:0px;width:52px">Ra</div>
<div class="cell" style="left:52px;width:76px">323.3707 nm</div>
<div class="cell" style="left:128px;width:62px">74.067 μm</div>
<div class="cell" style="left:190px;width:53px">0 mm</div>
<div class="cell" style="left:243px;width:59px">3.875 mm</div>
<div class="cell" style="left:302px;width:56px">0 mm</div>
<div class="cell" style="left:358px;width:64px">111</div>
</div>
<div class="abs" style="left:0;top:43px;width:6px;height:19px;background:#fbfbfb;border-bottom:1px solid #e3e3e3"></div>
<div class="row" style="left:6px;top:43px;width:422px;height:19px;background:#d9d9d9">
<div class="cell" style="left:0px;width:52px">Rq</div>
<div class="cell" style="left:52px;width:76px">406.9525 nm</div>
<div class="cell" style="left:128px;width:62px">74.067 μm</div>
<div class="cell" style="left:190px;width:53px">0 mm</div>
<div class="cell" style="left:243px;width:59px">3.875 mm</div>
<div class="cell" style="left:302px;width:56px">0 mm</div>
<div class="cell" style="left:358px;width:64px">111</div>
</div>
<div class="abs" style="left:0;top:62px;width:6px;height:19px;background:#fbfbfb;border-bottom:1px solid #e3e3e3"></div>
<div class="abs" style="left:0;top:61px;width:6px;height:20px;border:1px solid #9fd6f6;border-right:none"></div>
<div class="row" style="left:6px;top:62px;width:422px;height:19px;background:#efefef">
<div class="cell" style="left:0px;width:52px">Rz</div>
<div class="cell" style="left:52px;width:76px">1.8815 μm</div>
<div class="cell" style="left:128px;width:62px">74.067 μm</div>
<div class="cell" style="left:190px;width:53px">0 mm</div>
<div class="cell" style="left:243px;width:59px">3.875 mm</div>
<div class="cell" style="left:302px;width:56px">0 mm</div>
<div class="cell" style="left:358px;width:64px">111</div>
</div>
<div class="abs" style="left:0;top:81px;width:6px;height:19px;background:#fbfbfb;border-bottom:1px solid #e3e3e3"></div>
<div class="row" style="left:6px;top:81px;width:422px;height:19px;background:#d9d9d9">
<div class="cell" style="left:0px;width:52px">Total_Pa</div>
<div class="cell" style="left:52px;width:76px">2.6959 μm</div>
<div class="cell" style="left:128px;width:62px">74.067 μm</div>
<div class="cell" style="left:190px;width:53px">0 mm</div>
<div class="cell" style="left:243px;width:59px">3.875 mm</div>
<div class="cell" style="left:302px;width:56px">0 mm</div>
<div class="cell" style="left:358px;width:64px">111</div>
</div>
<div class="abs" style="left:0;top:100px;width:6px;height:19px;background:#fbfbfb;border-bottom:1px solid #e3e3e3"></div>
<div class="row" style="left:6px;top:100px;width:422px;height:19px;background:#ffffff">
<div class="cell" style="left:0px;width:52px">Total_Pq</div>
<div class="cell" style="left:52px;width:76px">2.9929 μm</div>
<div class="cell" style="left:128px;width:62px">74.067 μm</div>
<div class="cell" style="left:190px;width:53px">0 mm</div>
<div class="cell" style="left:243px;width:59px">3.875 mm</div>
<div class="cell" style="left:302px;width:56px">0 mm</div>
<div class="cell" style="left:358px;width:64px">111</div>
</div>
<div class="abs" style="left:0;top:119px;width:6px;height:19px;background:#fbfbfb;border-bottom:1px solid #e3e3e3"></div>
<div class="row" style="left:6px;top:119px;width:422px;height:19px;background:#d9d9d9">
<div class="cell" style="left:0px;width:52px">Total_Pz</div>
<div class="cell" style="left:52px;width:76px">8.8727 μm</div>
<div class="cell" style="left:128px;width:62px">74.067 μm</div>
<div class="cell" style="left:190px;width:53px">0 mm</div>
<div class="cell" style="left:243px;width:59px">3.875 mm</div>
<div class="cell" style="left:302px;width:56px">0 mm</div>
<div class="cell" style="left:358px;width:64px">111</div>
</div>
<div class="abs" style="left:0;top:138px;width:6px;height:19px;background:#fbfbfb;border-bottom:1px solid #e3e3e3"></div>
<div class="row" style="left:6px;top:138px;width:422px;height:19px;background:#ffffff">
<div class="cell" style="left:0px;width:52px">Total_Pa</div>
<div class="cell" style="left:52px;width:76px">2.6959 μm</div>
<div class="cell" style="left:128px;width:62px">74.067 μm</div>
<div class="cell" style="left:190px;width:53px">0 mm</div>
<div class="cell" style="left:243px;width:59px">3.875 mm</div>
<div class="cell" style="left:302px;width:56px">0 mm</div>
<div class="cell" style="left:358px;width:64px">Segment 1</div>
</div>
<div class="abs" style="left:0;top:157px;width:6px;height:19px;background:#fbfbfb;border-bottom:1px solid #e3e3e3"></div>
<div class="row" style="left:6px;top:157px;width:422px;height:19px;background:#d9d9d9">
<div class="cell" style="left:0px;width:52px">Total_Pq</div>
<div class="cell" style="left:52px;width:76px">2.9929 μm</div>
<div class="cell" style="left:128px;width:62px">74.067 μm</div>
<div class="cell" style="left:190px;width:53px">0 mm</div>
<div class="cell" style="left:243px;width:59px">3.875 mm</div>
<div class="cell" style="left:302px;width:56px">0 mm</div>
<div class="cell" style="left:358px;width:64px">Segment 1</div>
</div>
</div>
<div class="abs" style="left:1282px;top:234px;width:457px;height:10px;background:#fff"></div>
<div class="abs" style="left:1722px;top:61px;width:17px;height:173px;background:#ebebeb"></div>
<svg width="17" height="173" style="position:absolute;left:1722px;top:61px"><path d="M5,11 L8.5,7 L12,11z" fill="#7a7a7a"/><path d="M5,161 L8.5,165 L12,161z" fill="#7a7a7a"/></svg>
<div class="abs" style="left:1723px;top:79px;width:15px;height:104px;border:1px solid #979797;border-radius:2px;background:linear-gradient(90deg,#f4f4f4,#e6e6e6 40%,#d2d2d2 80%,#c8c8c8)"></div>
<div class="abs" style="left:1727px;top:128px;width:7px;height:1px;background:#333;box-shadow:0 2px 0 #333,0 4px 0 #333"></div>
<div class="panel" style="left:1282px;top:244px;width:457px;height:309px">
<div class="ptitle" style="top:6px">Meta Data</div>
<div class="gearbtn" style="left:428px;top:1px"><svg width="28" height="28" viewBox="0 0 28 28">
<g fill="#176cb0">
<circle cx="6.3" cy="10" r="3.1"/>
<rect x="5.5" y="5.8" width="1.6" height="8.4" rx="0.5" transform="rotate(0 6.3 10)"/><rect x="5.5" y="5.8" width="1.6" height="8.4" rx="0.5" transform="rotate(45 6.3 10)"/><rect x="5.5" y="5.8" width="1.6" height="8.4" rx="0.5" transform="rotate(90 6.3 10)"/><rect x="5.5" y="5.8" width="1.6" height="8.4" rx="0.5" transform="rotate(135 6.3 10)"/>
<circle cx="16.6" cy="14.7" r="5.6"/>
<rect x="15.1" y="7.1" width="3" height="15.2" rx="1" transform="rotate(0 16.6 14.7)"/><rect x="15.1" y="7.1" width="3" height="15.2" rx="1" transform="rotate(45 16.6 14.7)"/><rect x="15.1" y="7.1" width="3" height="15.2" rx="1" transform="rotate(90 16.6 14.7)"/><rect x="15.1" y="7.1" width="3" height="15.2" rx="1" transform="rotate(135 16.6 14.7)"/>
</g>
<circle cx="6.3" cy="10" r="1.2" fill="#bee0fb"/>
<circle cx="16.6" cy="14.7" r="2.2" fill="#bee0fb"/>
</svg></div>
</div>
<div class="tbl" style="left:1287px;top:279px;width:447px;height:270px">
<div class="hrow" style="width:445px;height:24px">
<div class="hcell" style="left:0px;width:96px;height:23px;line-height:23px">Label</div>
<div class="hcell" style="left:96px;width:88px;height:23px;line-height:23px">Value</div>
<div class="hcell" style="left:184px;width:261px;height:23px;line-height:23px"></div>
</div>
<div class="row" style="left:0px;top:24px;width:445px;height:19px;background:#ffffff">
<div class="cell" style="left:0px;width:96px">Date</div>
<div class="cell" style="left:96px;width:88px">3/17/2021</div>
<div class="cell" style="left:184px;width:261px"></div>
</div>
<div class="row" style="left:0px;top:43px;width:445px;height:19px;background:#d9d9d9">
<div class="cell" style="left:0px;width:96px">Profile</div>
<div class="cell" style="left:96px;width:88px">HillsAndValleys</div>
<div class="cell" style="left:184px;width:261px"></div>
</div>
<div class="row" style="left:0px;top:62px;width:445px;height:19px;background:#ffffff">
<div class="cell" style="left:0px;width:96px">ScanDuration</div>
<div class="cell" style="left:96px;width:88px">90 s</div>
<div class="cell" style="left:184px;width:261px"></div>
</div>
<div class="row" style="left:0px;top:81px;width:445px;height:19px;background:#d9d9d9">
<div class="cell" style="left:0px;width:96px">ScanLength</div>
<div class="cell" style="left:96px;width:88px">4000 μm</div>
<div class="cell" style="left:184px;width:261px"></div>
</div>
<div class="row" style="left:0px;top:100px;width:445px;height:19px;background:#ffffff">
<div class="cell" style="left:0px;width:96px">ScanResolution</div>
<div class="cell" style="left:96px;width:88px">0.148137 μm</div>
<div class="cell" style="left:184px;width:261px"></div>
</div>
<div class="row" style="left:0px;top:119px;width:445px;height:19px;background:#d9d9d9">
<div class="cell" style="left:0px;width:96px">ScanType</div>
<div class="cell" style="left:96px;width:88px">Standard Scan</div>
<div class="cell" style="left:184px;width:261px"></div>
</div>
<div class="row" style="left:0px;top:138px;width:445px;height:19px;background:#ffffff">
<div class="cell" style="left:0px;width:96px">StylusForce</div>
<div class="cell" style="left:96px;width:88px">3 mg</div>
<div class="cell" style="left:184px;width:261px"></div>
</div>
<div class="row" style="left:0px;top:157px;width:445px;height:19px;background:#d9d9d9">
<div class="cell" style="left:0px;width:96px">StylusScanRange</div>
<div class="cell" style="left:96px;width:88px">65.5 μm</div>
<div class="cell" style="left:184px;width:261px"></div>
</div>
<div class="row" style="left:0px;top:176px;width:445px;height:18px;background:#ffffff">
<div class="cell" style="left:0px;width:96px">StylusType</div>
<div class="cell" style="left:96px;width:88px">Radius: 2 μm</div>
<div class="cell" style="left:184px;width:261px"></div>
</div>
<div class="row" style="left:0px;top:194px;width:445px;height:19px;background:#d9d9d9">
<div class="cell" style="left:0px;width:96px">Time</div>
<div class="cell" style="left:96px;width:88px">8:10:31 PM</div>
<div class="cell" style="left:184px;width:261px"></div>
</div>
</div>
<div class="panel" style="left:1282px;top:562px;width:457px;height:147px">
<div class="ptitle" style="top:6px;padding-right:29px">Watch List</div>
<div class="gearbtn" style="left:428px;top:1px"><svg width="28" height="28" viewBox="0 0 28 28">
<g fill="#176cb0">
<circle cx="6.3" cy="10" r="3.1"/>
<rect x="5.5" y="5.8" width="1.6" height="8.4" rx="0.5" transform="rotate(0 6.3 10)"/><rect x="5.5" y="5.8" width="1.6" height="8.4" rx="0.5" transform="rotate(45 6.3 10)"/><rect x="5.5" y="5.8" width="1.6" height="8.4" rx="0.5" transform="rotate(90 6.3 10)"/><rect x="5.5" y="5.8" width="1.6" height="8.4" rx="0.5" transform="rotate(135 6.3 10)"/>
<circle cx="16.6" cy="14.7" r="5.6"/>
<rect x="15.1" y="7.1" width="3" height="15.2" rx="1" transform="rotate(0 16.6 14.7)"/><rect x="15.1" y="7.1" width="3" height="15.2" rx="1" transform="rotate(45 16.6 14.7)"/><rect x="15.1" y="7.1" width="3" height="15.2" rx="1" transform="rotate(90 16.6 14.7)"/><rect x="15.1" y="7.1" width="3" height="15.2" rx="1" transform="rotate(135 16.6 14.7)"/>
</g>
<circle cx="6.3" cy="10" r="1.2" fill="#bee0fb"/>
<circle cx="16.6" cy="14.7" r="2.2" fill="#bee0fb"/>
</svg></div>
</div>
<div class="tbl" style="left:1287px;top:598px;width:447px;height:106px">
<div class="hrow" style="width:445px;height:23px">
<div class="abs" style="left:0;top:0;width:6px;height:22px;background:#e9e9e9"></div>
<div class="hcell" style="left:6px;width:61px;height:22px;line-height:22px">Label</div>
<div class="hcell" style="left:67px;width:80px;height:22px;line-height:22px">Value</div>
<div class="hcell" style="left:147px;width:298px;height:22px;line-height:22px"></div>
</div>
<div class="abs" style="left:0;top:23px;width:6px;height:19px;background:#fbfbfb;border-bottom:1px solid #e3e3e3"></div>
<div class="row" style="left:6px;top:23px;width:439px;height:19px;background:#ffffff">
<div class="cell" style="left:0px;width:61px">Total_ASH</div>
<div class="cell" style="left:61px;width:80px">0 nm</div>
<div class="cell" style="left:141px;width:298px"></div>
</div>
<div class="abs" style="left:0;top:42px;width:6px;height:19px;background:#fbfbfb;border-bottom:1px solid #e3e3e3"></div>
<div class="row" style="left:6px;top:42px;width:439px;height:19px;background:#d9d9d9">
<div class="cell" style="left:0px;width:61px"></div>
<div class="cell" style="left:61px;width:80px"></div>
<div class="cell" style="left:141px;width:298px"></div>
</div>
</div>
<div class="panel" style="left:8px;top:561px;width:1262px;height:148px"></div>
<div class="abs" style="left:19px;top:576px;width:509px;height:127px;border:1px solid #a4adb5;border-radius:3px"></div><div class="abs" style="left:20px;top:577px;width:507px;height:125px;border:1px solid #ffffff;border-radius:2px"></div><div class="gtitle" style="left:25px;top:569px">Plot Legend</div>
<div class="abs" style="left:29px;top:588px;width:489px;height:105px;border:1px solid #93a3b3;background:#efefef"></div>
<div class="abs" style="left:35px;top:595px;width:13px;height:13px;border:1px solid #8f8f8f;background:#fff"><div class="abs" style="left:1px;top:1px;width:9px;height:9px;background:linear-gradient(135deg,#cbd0d5,#f2f3f4)"></div></div>
<div class="abs" style="left:52px;top:595px;width:16px;height:16px;background:#800000"></div>
<div class="abs" style="left:75px;top:595px;line-height:18px;font-size:12px;letter-spacing:-0.2px;color:#1a1a1a">Roughness Profile</div>
<div class="abs" style="left:35px;top:621px;width:13px;height:13px;border:1px solid #8f8f8f;background:#fff"><div class="abs" style="left:1px;top:1px;width:9px;height:9px;background:linear-gradient(135deg,#cbd0d5,#f2f3f4)"></div><svg width="13" height="13" style="position:absolute;left:0;top:0"><path d="M3,5.6 L5.3,8.8 L9.3,2" fill="none" stroke="#2c2c80" stroke-width="1.8"/></svg></div>
<div class="abs" style="left:52px;top:621px;width:16px;height:16px;background:#ff0000"></div>
<div class="abs" style="left:75px;top:621px;line-height:18px;font-size:12px;letter-spacing:-0.2px;color:#1a1a1a">Waviness Profile</div>
<div class="abs" style="left:35px;top:647px;width:13px;height:13px;border:1px solid #8f8f8f;background:#fff"><div class="abs" style="left:1px;top:1px;width:9px;height:9px;background:linear-gradient(135deg,#cbd0d5,#f2f3f4)"></div><svg width="13" height="13" style="position:absolute;left:0;top:0"><path d="M3,5.6 L5.3,8.8 L9.3,2" fill="none" stroke="#2c2c80" stroke-width="1.8"/></svg></div>
<div class="abs" style="left:52px;top:647px;width:16px;height:16px;background:#000080"></div>
<div class="abs" style="left:75px;top:647px;line-height:18px;font-size:12px;letter-spacing:-0.2px;color:#1a1a1a">Total Profile</div>
<div class="abs" style="left:549px;top:576px;width:570px;height:126px;border:1px solid #a4adb5;border-radius:3px"></div><div class="abs" style="left:550px;top:577px;width:568px;height:124px;border:1px solid #ffffff;border-radius:2px"></div><div class="gtitle" style="left:554px;top:569px">Cursor Status</div>
<div class="abs" style="left:559px;top:589px;width:100px;height:27px;border:1px solid #a9a9a9;background:#efefef;font-weight:bold;line-height:25px;padding-top:1px;padding-left:4px;white-space:nowrap;overflow:hidden;letter-spacing:-0.2px">Label</div>
<div class="abs" style="left:659px;top:589px;width:150px;height:27px;border:1px solid #a9a9a9;background:#efefef;font-weight:bold;line-height:25px;padding-top:1px;padding-left:4px;white-space:nowrap;overflow:hidden;letter-spacing:-0.2px">Position (mm)</div>
<div class="abs" style="left:809px;top:589px;width:150px;height:27px;border:1px solid #a9a9a9;background:#efefef;font-weight:bold;line-height:25px;padding-top:1px;padding-left:4px;white-space:nowrap;overflow:hidden;letter-spacing:-0.2px"><span style="display:inline-block;max-width:125px;overflow:hidden;vertical-align:top">Roughness Profile (μm</span><svg width="9" height="5" style="position:absolute;right:6px;top:12px"><path d="M0,0 L9,0 L4.5,4.5z" fill="#222"/></svg></div>
<div class="abs" style="left:959px;top:589px;width:150px;height:27px;border:1px solid #a9a9a9;background:#efefef;font-weight:bold;line-height:25px;padding-top:1px;padding-left:4px;white-space:nowrap;overflow:hidden;letter-spacing:-0.2px">Width (mm)</div>
<div class="abs" style="left:559px;top:616px;width:100px;height:26px;border:1px solid #a9a9a9;background:#efefef;font-weight:bold;line-height:24px;padding-top:1px;padding-left:4px;white-space:nowrap;overflow:hidden;letter-spacing:-0.2px">R</div>
<div class="abs" style="left:659px;top:616px;width:150px;height:26px;border:1px solid #a9a9a9;background:#ffffff;font-weight:normal;line-height:24px;padding-top:1px;padding-left:4px;white-space:nowrap;overflow:hidden;letter-spacing:-0.2px">0.0741</div>
<div class="abs" style="left:809px;top:616px;width:150px;height:26px;border:1px solid #a9a9a9;background:#ffffff;font-weight:normal;line-height:24px;padding-top:1px;padding-left:4px;white-space:nowrap;overflow:hidden;letter-spacing:-0.2px">0.0580</div>
<div class="abs" style="left:959px;top:616px;width:150px;height:26px;border:1px solid #a9a9a9;background:#ffffff;font-weight:normal;line-height:24px;padding-top:1px;padding-left:4px;white-space:nowrap;overflow:hidden;letter-spacing:-0.2px">0.0000</div>
<div class="abs" style="left:559px;top:642px;width:100px;height:25px;border:1px solid #a9a9a9;background:#efefef;font-weight:bold;line-height:23px;padding-top:1px;padding-left:4px;white-space:nowrap;overflow:hidden;letter-spacing:-0.2px">M</div>
<div class="abs" style="left:659px;top:642px;width:150px;height:25px;border:1px solid #a9a9a9;background:#ffffff;font-weight:normal;line-height:23px;padding-top:1px;padding-left:4px;white-space:nowrap;overflow:hidden;letter-spacing:-0.2px">3.8751</div>
<div class="abs" style="left:809px;top:642px;width:150px;height:25px;border:1px solid #a9a9a9;background:#ffffff;font-weight:normal;line-height:23px;padding-top:1px;padding-left:4px;white-space:nowrap;overflow:hidden;letter-spacing:-0.2px">-0.0039</div>
<div class="abs" style="left:959px;top:642px;width:150px;height:25px;border:1px solid #a9a9a9;background:#ffffff;font-weight:normal;line-height:23px;padding-top:1px;padding-left:4px;white-space:nowrap;overflow:hidden;letter-spacing:-0.2px">0.0000</div>
<div class="abs" style="left:559px;top:667px;width:100px;height:26px;border:1px solid #a9a9a9;background:#efefef;font-weight:bold;line-height:24px;padding-top:1px;padding-left:4px;white-space:nowrap;overflow:hidden;letter-spacing:-0.2px">Δ</div>
<div class="abs" style="left:659px;top:667px;width:150px;height:26px;border:1px solid #a9a9a9;background:#ffffff;font-weight:normal;line-height:24px;padding-top:1px;padding-left:4px;white-space:nowrap;overflow:hidden;letter-spacing:-0.2px">3.8011</div>
<div class="abs" style="left:809px;top:667px;width:150px;height:26px;border:1px solid #a9a9a9;background:#ffffff;font-weight:normal;line-height:24px;padding-top:1px;padding-left:4px;white-space:nowrap;overflow:hidden;letter-spacing:-0.2px">-0.0619</div>
<div class="abs" style="left:1141px;top:576px;width:118px;height:126px;border:1px solid #a4adb5;border-radius:3px"></div><div class="abs" style="left:1142px;top:577px;width:116px;height:124px;border:1px solid #ffffff;border-radius:2px"></div><div class="gtitle" style="left:1146px;top:569px">Cursor Control</div>
<div class="abs" style="left:1184px;top:588px;width:32px;height:32px;border:1px solid #6e6e6e;border-radius:4px;background:linear-gradient(#fbfbfb,#d8d8d8)"><div class="abs" style="left:2px;top:3px;width:25px;height:25px;border-radius:3px;background:linear-gradient(160deg,#5b7fe0 0%,#2140c0 35%,#1730b0 60%,#4a6ad0 100%)"></div><svg width="32" height="32" style="position:absolute;left:-1px;top:-1px"><g transform="rotate(0 16 16)"><path d="M16,9.5 L16,23 M10,15.2 L16,9.2 L22,15.2" fill="none" stroke="#fff" stroke-width="3.6" stroke-linecap="round" stroke-linejoin="round"/></g></svg></div>
<div class="abs" style="left:1152px;top:620px;width:32px;height:32px;border:1px solid #6e6e6e;border-radius:4px;background:linear-gradient(#fbfbfb,#d8d8d8)"><div class="abs" style="left:2px;top:3px;width:25px;height:25px;border-radius:3px;background:linear-gradient(160deg,#5b7fe0 0%,#2140c0 35%,#1730b0 60%,#4a6ad0 100%)"></div><svg width="32" height="32" style="position:absolute;left:-1px;top:-1px"><g transform="rotate(-90 16 16)"><path d="M16,9.5 L16,23 M10,15.2 L16,9.2 L22,15.2" fill="none" stroke="#fff" stroke-width="3.6" stroke-linecap="round" stroke-linejoin="round"/></g></svg></div>
<div class="abs" style="left:1216px;top:620px;width:32px;height:32px;border:1px solid #6e6e6e;border-radius:4px;background:linear-gradient(#fbfbfb,#d8d8d8)"><div class="abs" style="left:2px;top:3px;width:25px;height:25px;border-radius:3px;background:linear-gradient(160deg,#5b7fe0 0%,#2140c0 35%,#1730b0 60%,#4a6ad0 100%)"></div><svg width="32" height="32" style="position:absolute;left:-1px;top:-1px"><g transform="rotate(90 16 16)"><path d="M16,9.5 L16,23 M10,15.2 L16,9.2 L22,15.2" fill="none" stroke="#fff" stroke-width="3.6" stroke-linecap="round" stroke-linejoin="round"/></g></svg></div>
<div class="abs" style="left:1184px;top:652px;width:32px;height:32px;border:1px solid #6e6e6e;border-radius:4px;background:linear-gradient(#fbfbfb,#d8d8d8)"><div class="abs" style="left:2px;top:3px;width:25px;height:25px;border-radius:3px;background:linear-gradient(160deg,#5b7fe0 0%,#2140c0 35%,#1730b0 60%,#4a6ad0 100%)"></div><svg width="32" height="32" style="position:absolute;left:-1px;top:-1px"><g transform="rotate(180 16 16)"><path d="M16,9.5 L16,23 M10,15.2 L16,9.2 L22,15.2" fill="none" stroke="#fff" stroke-width="3.6" stroke-linecap="round" stroke-linejoin="round"/></g></svg></div>
<div class="abs" style="left:1184px;top:620px;width:31px;height:31px;border:1px solid #a9c9e3;text-align:center;font-weight:bold;font-size:21px;line-height:30px">F</div>
<div class="abs" style="left:1152px;top:653px;width:31px;height:31px;border:1px solid #a9c9e3;text-align:center;font-weight:bold;font-size:21px;line-height:30px;color:#ff0000">R</div>
<div class="abs" style="left:1216px;top:653px;width:31px;height:31px;border:1px solid #f0c088;background:linear-gradient(#fdd59a,#fbc477 50%,#f59a12 85%,#f08c00);text-align:center;font-weight:bold;font-size:21px;line-height:30px;color:#2e6b1e">M</div>
<div class="abs" style="left:0;top:713px;width:1743px;height:1px;background:#858585"></div><div class="abs" style="left:0;top:714px;width:1743px;height:1px;background:#d0d0d0"></div>
</body></html>
